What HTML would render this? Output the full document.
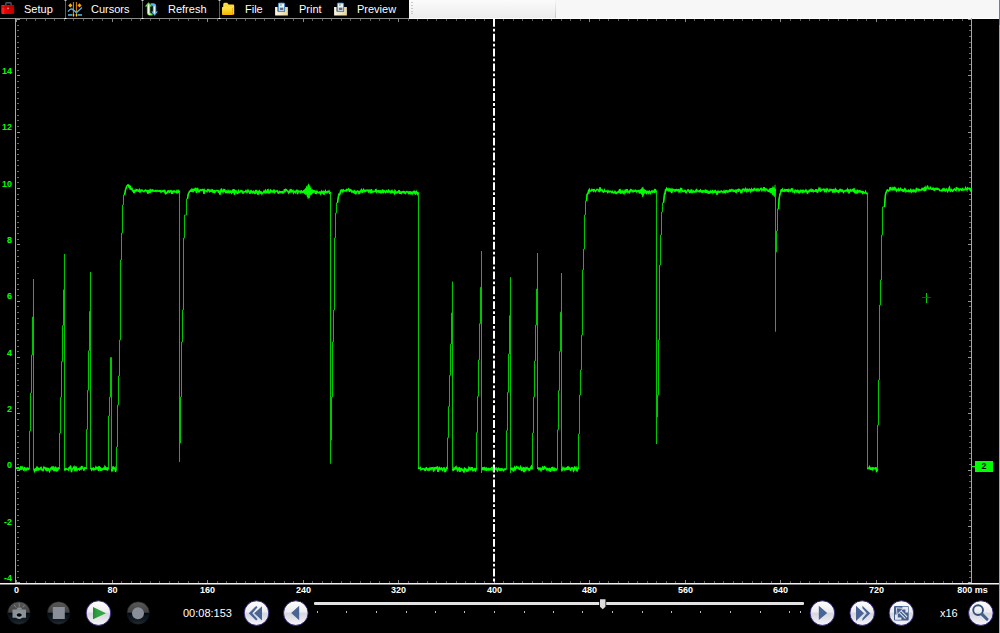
<!DOCTYPE html>
<html><head><meta charset="utf-8">
<style>
html,body{margin:0;padding:0;background:#000;}
body{width:1000px;height:633px;overflow:hidden;position:relative;font-family:"Liberation Sans",sans-serif;}
.abs{position:absolute;}
#tb{position:absolute;left:0;top:0;width:409px;height:18px;background:#000;}
#lt1{position:absolute;left:409px;top:0;width:146px;height:18px;background:linear-gradient(#fbfbfb,#ececec);}
#lt2{position:absolute;left:555px;top:0;width:444px;height:18px;background:#f7f7f7;}
.tt{position:absolute;top:0;height:18px;line-height:18px;font-size:11px;color:#fff;white-space:nowrap;}
.yl{position:absolute;left:0;width:12px;height:14px;line-height:14px;text-align:right;font-size:9px;font-weight:bold;color:#00ff00;}
.xl{position:absolute;top:584px;width:60px;height:12px;line-height:12px;text-align:center;font-size:9px;font-weight:bold;color:#fff;white-space:nowrap;}
svg{position:absolute;left:0;top:0;}
</style></head><body>
<div id="tb"></div><div id="lt1"></div><div id="lt2"></div>
<svg width="420" height="18" viewBox="0 0 420 18" style="position:absolute;left:0;top:0">
 <defs>
  <linearGradient id="tbr" x1="0" y1="0" x2="1" y2="0"><stop offset="0" stop-color="#d80000"/><stop offset="0.15" stop-color="#ff2a2a"/><stop offset="0.3" stop-color="#e80000"/><stop offset="1" stop-color="#c00000"/></linearGradient>
  <linearGradient id="fy" x1="0" y1="0" x2="0" y2="1"><stop offset="0" stop-color="#ffe84a"/><stop offset="1" stop-color="#f4b400"/></linearGradient>
  <linearGradient id="tray" x1="0" y1="0" x2="1" y2="0"><stop offset="0" stop-color="#fbf6e6"/><stop offset="1" stop-color="#e8d49a"/></linearGradient>
 </defs>
 <!-- toolbox -->
 <path d="M5.8 5 V3.6 Q5.8 2.8 6.6 2.8 H10.3 Q11.1 2.8 11.1 3.6 V5" fill="none" stroke="#4a5a5a" stroke-width="1.4"/>
 <rect x="1.1" y="5" width="13" height="8.9" rx="0.8" fill="url(#tbr)"/>
 <rect x="1.1" y="6.6" width="13" height="0.8" fill="#a00000"/>
 <circle cx="8" cy="8.3" r="0.9" fill="#b0b0b0"/>
 <!-- cursors icon -->
 <g stroke="#e88a00" stroke-width="1"><line x1="73.4" y1="2" x2="73.4" y2="16.8"/><line x1="76.4" y1="2" x2="76.4" y2="16.8"/></g>
 <path d="M70.3 3.2 L72.4 5.4 L70.3 7.6 L68.2 5.4Z" fill="#ffb400"/>
 <path d="M79.5 3.2 L81.6 5.4 L79.5 7.6 L77.4 5.4Z" fill="#ffa000"/>
 <path d="M68 11.6 Q70.8 7.4 73.4 10 L76.5 12.6 L82 7.6" fill="none" stroke="#5ab0e6" stroke-width="1.3"/>
 <rect x="68" y="14.2" width="4.2" height="1.5" fill="#5ab8ec"/><rect x="77.8" y="14.2" width="4.2" height="1.5" fill="#5ab8ec"/>
 <rect x="72.8" y="14" width="1.4" height="2" fill="#ffc800"/><rect x="75.8" y="14" width="1.4" height="2" fill="#ffc800"/>
 <!-- refresh -->
 <path d="M150.6 3.2 H153 Q156.2 3.2 156.2 6.4 V11.6 H158 L154.6 15.8 L151.2 11.6 H152.8 V6.8 Q152.8 5.6 151.6 5.6 H150.6Z" fill="#5ab4f0"/>
 <path d="M154.4 6.2 V13.6" stroke="#e4f2ff" stroke-width="1.2"/>
 <path d="M148.5 2.2 L152.2 6.6 H150.3 V12 Q150.3 13.4 151.6 13.4 H152.6 V15.6 H150.6 Q146.9 15.6 146.9 12.2 V6.6 H144.8Z" fill="#6cd84a"/>
 <path d="M148.6 4.4 V12.8 Q148.6 14.4 150.4 14.5" fill="none" stroke="#f0ffe8" stroke-width="1.2"/>
 <!-- folder -->
 <path d="M223.2 4.6 Q223.2 2.8 224.6 2.8 H227.2 L228.6 4.6 H233 Q234.2 4.6 234.2 5.8 V14.6 H223.2Z" fill="#ffd83a"/>
 <path d="M222 7.6 Q222 7 222.6 7 H231.4 Q232.6 7 232.6 8.2 V14.9 H222.8 Q222 14.9 222 14.2Z" fill="url(#fy)"/>
 <path d="M232.6 8.2 V14.9" stroke="#e89a00" stroke-width="0.8"/>
 <!-- print -->
 <path d="M275.1 7.1 H277.6 V11.6 H285 V7.1 H287.9 V15.6 H275.1Z" fill="url(#tray)"/>
 <rect x="278.4" y="3.1" width="6.2" height="8.1" rx="0.6" fill="#e8f0f8" stroke="#3a8ed6" stroke-width="0.9"/>
 <rect x="279.8" y="7.6" width="3.6" height="2.4" fill="#6a6a6a"/>
 <rect x="280.2" y="3.8" width="1.4" height="2.2" fill="#a0a8b0"/>
 <!-- preview -->
 <path d="M334.1 7.1 H336.6 V11.6 H344 V7.1 H346.9 V15.6 H334.1Z" fill="url(#tray)"/>
 <rect x="337.4" y="3.1" width="6.2" height="8.1" rx="0.6" fill="#e8f0f8" stroke="#3a8ed6" stroke-width="0.9"/>
 <rect x="338.8" y="7.6" width="3.6" height="2.4" fill="#6a6a6a"/>
 <rect x="339.2" y="3.8" width="1.4" height="2.2" fill="#a0a8b0"/>
</svg>
<svg width="1000" height="633" viewBox="0 0 1000 633">
 <!-- grip -->
 <g fill="#c8c8c8"><rect x="411" y="2" width="2" height="1"/><rect x="411" y="5" width="2" height="1"/><rect x="411" y="8" width="2" height="1"/><rect x="411" y="11" width="2" height="1"/><rect x="411" y="13" width="2" height="1"/></g>
 <defs><linearGradient id="dv" x1="0" y1="0" x2="0" y2="1"><stop offset="0" stop-color="#f6f6f6"/><stop offset="1" stop-color="#c4c4c4"/></linearGradient></defs><rect x="555" y="0" width="1" height="18" fill="url(#dv)"/>
 <!-- right border -->
 <rect x="999" y="0" width="1" height="633" fill="#a4a8ac"/>
 <rect x="999" y="0" width="1" height="25" fill="#6f7f90"/>
 <!-- axes -->
 <rect x="0" y="18" width="999" height="1" fill="#8c8c8c"/>
 <rect x="409" y="18" width="590" height="1" fill="#ffffff"/>
 <rect x="15" y="18" width="1" height="566" fill="#a8a8a8"/>
 <rect x="971" y="18" width="1" height="566" fill="#a8a8a8"/>
 <rect x="0" y="583" width="999" height="1.5" fill="#f0f0f0"/>
 <!-- toolbar separators -->
 <g fill="#5e5e5e"><rect x="65" y="0" width="1" height="18"/><rect x="142" y="0" width="1" height="18"/><rect x="219" y="0" width="1" height="18"/></g>
 <g fill="#c8c8c8"><rect x="64.5" y="0" width="2" height="1"/><rect x="141.5" y="0" width="2" height="1"/><rect x="218.5" y="0" width="2" height="1"/></g>
 <g fill="#ffffff"><rect x="64.5" y="18" width="2" height="1"/><rect x="141.5" y="18" width="2" height="1"/><rect x="218.5" y="18" width="2" height="1"/></g>
 <rect x="16" y="19" width="1" height="3" fill="#8a8a8a"/><rect x="16" y="580" width="1" height="3" fill="#8a8a8a"/><rect x="26" y="19" width="1" height="2" fill="#5a5a5a"/><rect x="26" y="581" width="1" height="2" fill="#5a5a5a"/><rect x="35" y="19" width="1" height="2" fill="#5a5a5a"/><rect x="35" y="581" width="1" height="2" fill="#5a5a5a"/><rect x="45" y="19" width="1" height="2" fill="#5a5a5a"/><rect x="45" y="581" width="1" height="2" fill="#5a5a5a"/><rect x="54" y="19" width="1" height="2" fill="#5a5a5a"/><rect x="54" y="581" width="1" height="2" fill="#5a5a5a"/><rect x="64" y="19" width="1" height="2" fill="#5a5a5a"/><rect x="64" y="581" width="1" height="2" fill="#5a5a5a"/><rect x="73" y="19" width="1" height="2" fill="#5a5a5a"/><rect x="73" y="581" width="1" height="2" fill="#5a5a5a"/><rect x="83" y="19" width="1" height="2" fill="#5a5a5a"/><rect x="83" y="581" width="1" height="2" fill="#5a5a5a"/><rect x="92" y="19" width="1" height="2" fill="#5a5a5a"/><rect x="92" y="581" width="1" height="2" fill="#5a5a5a"/><rect x="102" y="19" width="1" height="2" fill="#5a5a5a"/><rect x="102" y="581" width="1" height="2" fill="#5a5a5a"/><rect x="112" y="19" width="1" height="3" fill="#8a8a8a"/><rect x="112" y="580" width="1" height="3" fill="#8a8a8a"/><rect x="121" y="19" width="1" height="2" fill="#5a5a5a"/><rect x="121" y="581" width="1" height="2" fill="#5a5a5a"/><rect x="131" y="19" width="1" height="2" fill="#5a5a5a"/><rect x="131" y="581" width="1" height="2" fill="#5a5a5a"/><rect x="140" y="19" width="1" height="2" fill="#5a5a5a"/><rect x="140" y="581" width="1" height="2" fill="#5a5a5a"/><rect x="150" y="19" width="1" height="2" fill="#5a5a5a"/><rect x="150" y="581" width="1" height="2" fill="#5a5a5a"/><rect x="159" y="19" width="1" height="2" fill="#5a5a5a"/><rect x="159" y="581" width="1" height="2" fill="#5a5a5a"/><rect x="169" y="19" width="1" height="2" fill="#5a5a5a"/><rect x="169" y="581" width="1" height="2" fill="#5a5a5a"/><rect x="178" y="19" width="1" height="2" fill="#5a5a5a"/><rect x="178" y="581" width="1" height="2" fill="#5a5a5a"/><rect x="188" y="19" width="1" height="2" fill="#5a5a5a"/><rect x="188" y="581" width="1" height="2" fill="#5a5a5a"/><rect x="198" y="19" width="1" height="2" fill="#5a5a5a"/><rect x="198" y="581" width="1" height="2" fill="#5a5a5a"/><rect x="207" y="19" width="1" height="3" fill="#8a8a8a"/><rect x="207" y="580" width="1" height="3" fill="#8a8a8a"/><rect x="217" y="19" width="1" height="2" fill="#5a5a5a"/><rect x="217" y="581" width="1" height="2" fill="#5a5a5a"/><rect x="226" y="19" width="1" height="2" fill="#5a5a5a"/><rect x="226" y="581" width="1" height="2" fill="#5a5a5a"/><rect x="236" y="19" width="1" height="2" fill="#5a5a5a"/><rect x="236" y="581" width="1" height="2" fill="#5a5a5a"/><rect x="245" y="19" width="1" height="2" fill="#5a5a5a"/><rect x="245" y="581" width="1" height="2" fill="#5a5a5a"/><rect x="255" y="19" width="1" height="2" fill="#5a5a5a"/><rect x="255" y="581" width="1" height="2" fill="#5a5a5a"/><rect x="264" y="19" width="1" height="2" fill="#5a5a5a"/><rect x="264" y="581" width="1" height="2" fill="#5a5a5a"/><rect x="274" y="19" width="1" height="2" fill="#5a5a5a"/><rect x="274" y="581" width="1" height="2" fill="#5a5a5a"/><rect x="284" y="19" width="1" height="2" fill="#5a5a5a"/><rect x="284" y="581" width="1" height="2" fill="#5a5a5a"/><rect x="293" y="19" width="1" height="2" fill="#5a5a5a"/><rect x="293" y="581" width="1" height="2" fill="#5a5a5a"/><rect x="303" y="19" width="1" height="3" fill="#8a8a8a"/><rect x="303" y="580" width="1" height="3" fill="#8a8a8a"/><rect x="312" y="19" width="1" height="2" fill="#5a5a5a"/><rect x="312" y="581" width="1" height="2" fill="#5a5a5a"/><rect x="322" y="19" width="1" height="2" fill="#5a5a5a"/><rect x="322" y="581" width="1" height="2" fill="#5a5a5a"/><rect x="331" y="19" width="1" height="2" fill="#5a5a5a"/><rect x="331" y="581" width="1" height="2" fill="#5a5a5a"/><rect x="341" y="19" width="1" height="2" fill="#5a5a5a"/><rect x="341" y="581" width="1" height="2" fill="#5a5a5a"/><rect x="350" y="19" width="1" height="2" fill="#5a5a5a"/><rect x="350" y="581" width="1" height="2" fill="#5a5a5a"/><rect x="360" y="19" width="1" height="2" fill="#5a5a5a"/><rect x="360" y="581" width="1" height="2" fill="#5a5a5a"/><rect x="370" y="19" width="1" height="2" fill="#5a5a5a"/><rect x="370" y="581" width="1" height="2" fill="#5a5a5a"/><rect x="379" y="19" width="1" height="2" fill="#5a5a5a"/><rect x="379" y="581" width="1" height="2" fill="#5a5a5a"/><rect x="389" y="19" width="1" height="2" fill="#5a5a5a"/><rect x="389" y="581" width="1" height="2" fill="#5a5a5a"/><rect x="398" y="19" width="1" height="3" fill="#8a8a8a"/><rect x="398" y="580" width="1" height="3" fill="#8a8a8a"/><rect x="408" y="19" width="1" height="2" fill="#5a5a5a"/><rect x="408" y="581" width="1" height="2" fill="#5a5a5a"/><rect x="417" y="19" width="1" height="2" fill="#5a5a5a"/><rect x="417" y="581" width="1" height="2" fill="#5a5a5a"/><rect x="427" y="19" width="1" height="2" fill="#5a5a5a"/><rect x="427" y="581" width="1" height="2" fill="#5a5a5a"/><rect x="436" y="19" width="1" height="2" fill="#5a5a5a"/><rect x="436" y="581" width="1" height="2" fill="#5a5a5a"/><rect x="446" y="19" width="1" height="2" fill="#5a5a5a"/><rect x="446" y="581" width="1" height="2" fill="#5a5a5a"/><rect x="456" y="19" width="1" height="2" fill="#5a5a5a"/><rect x="456" y="581" width="1" height="2" fill="#5a5a5a"/><rect x="465" y="19" width="1" height="2" fill="#5a5a5a"/><rect x="465" y="581" width="1" height="2" fill="#5a5a5a"/><rect x="475" y="19" width="1" height="2" fill="#5a5a5a"/><rect x="475" y="581" width="1" height="2" fill="#5a5a5a"/><rect x="484" y="19" width="1" height="2" fill="#5a5a5a"/><rect x="484" y="581" width="1" height="2" fill="#5a5a5a"/><rect x="494" y="19" width="1" height="3" fill="#8a8a8a"/><rect x="494" y="580" width="1" height="3" fill="#8a8a8a"/><rect x="503" y="19" width="1" height="2" fill="#5a5a5a"/><rect x="503" y="581" width="1" height="2" fill="#5a5a5a"/><rect x="513" y="19" width="1" height="2" fill="#5a5a5a"/><rect x="513" y="581" width="1" height="2" fill="#5a5a5a"/><rect x="522" y="19" width="1" height="2" fill="#5a5a5a"/><rect x="522" y="581" width="1" height="2" fill="#5a5a5a"/><rect x="532" y="19" width="1" height="2" fill="#5a5a5a"/><rect x="532" y="581" width="1" height="2" fill="#5a5a5a"/><rect x="542" y="19" width="1" height="2" fill="#5a5a5a"/><rect x="542" y="581" width="1" height="2" fill="#5a5a5a"/><rect x="551" y="19" width="1" height="2" fill="#5a5a5a"/><rect x="551" y="581" width="1" height="2" fill="#5a5a5a"/><rect x="561" y="19" width="1" height="2" fill="#5a5a5a"/><rect x="561" y="581" width="1" height="2" fill="#5a5a5a"/><rect x="570" y="19" width="1" height="2" fill="#5a5a5a"/><rect x="570" y="581" width="1" height="2" fill="#5a5a5a"/><rect x="580" y="19" width="1" height="2" fill="#5a5a5a"/><rect x="580" y="581" width="1" height="2" fill="#5a5a5a"/><rect x="589" y="19" width="1" height="3" fill="#8a8a8a"/><rect x="589" y="580" width="1" height="3" fill="#8a8a8a"/><rect x="599" y="19" width="1" height="2" fill="#5a5a5a"/><rect x="599" y="581" width="1" height="2" fill="#5a5a5a"/><rect x="608" y="19" width="1" height="2" fill="#5a5a5a"/><rect x="608" y="581" width="1" height="2" fill="#5a5a5a"/><rect x="618" y="19" width="1" height="2" fill="#5a5a5a"/><rect x="618" y="581" width="1" height="2" fill="#5a5a5a"/><rect x="628" y="19" width="1" height="2" fill="#5a5a5a"/><rect x="628" y="581" width="1" height="2" fill="#5a5a5a"/><rect x="637" y="19" width="1" height="2" fill="#5a5a5a"/><rect x="637" y="581" width="1" height="2" fill="#5a5a5a"/><rect x="647" y="19" width="1" height="2" fill="#5a5a5a"/><rect x="647" y="581" width="1" height="2" fill="#5a5a5a"/><rect x="656" y="19" width="1" height="2" fill="#5a5a5a"/><rect x="656" y="581" width="1" height="2" fill="#5a5a5a"/><rect x="666" y="19" width="1" height="2" fill="#5a5a5a"/><rect x="666" y="581" width="1" height="2" fill="#5a5a5a"/><rect x="675" y="19" width="1" height="2" fill="#5a5a5a"/><rect x="675" y="581" width="1" height="2" fill="#5a5a5a"/><rect x="685" y="19" width="1" height="3" fill="#8a8a8a"/><rect x="685" y="580" width="1" height="3" fill="#8a8a8a"/><rect x="694" y="19" width="1" height="2" fill="#5a5a5a"/><rect x="694" y="581" width="1" height="2" fill="#5a5a5a"/><rect x="704" y="19" width="1" height="2" fill="#5a5a5a"/><rect x="704" y="581" width="1" height="2" fill="#5a5a5a"/><rect x="714" y="19" width="1" height="2" fill="#5a5a5a"/><rect x="714" y="581" width="1" height="2" fill="#5a5a5a"/><rect x="723" y="19" width="1" height="2" fill="#5a5a5a"/><rect x="723" y="581" width="1" height="2" fill="#5a5a5a"/><rect x="733" y="19" width="1" height="2" fill="#5a5a5a"/><rect x="733" y="581" width="1" height="2" fill="#5a5a5a"/><rect x="742" y="19" width="1" height="2" fill="#5a5a5a"/><rect x="742" y="581" width="1" height="2" fill="#5a5a5a"/><rect x="752" y="19" width="1" height="2" fill="#5a5a5a"/><rect x="752" y="581" width="1" height="2" fill="#5a5a5a"/><rect x="761" y="19" width="1" height="2" fill="#5a5a5a"/><rect x="761" y="581" width="1" height="2" fill="#5a5a5a"/><rect x="771" y="19" width="1" height="2" fill="#5a5a5a"/><rect x="771" y="581" width="1" height="2" fill="#5a5a5a"/><rect x="780" y="19" width="1" height="3" fill="#8a8a8a"/><rect x="780" y="580" width="1" height="3" fill="#8a8a8a"/><rect x="790" y="19" width="1" height="2" fill="#5a5a5a"/><rect x="790" y="581" width="1" height="2" fill="#5a5a5a"/><rect x="800" y="19" width="1" height="2" fill="#5a5a5a"/><rect x="800" y="581" width="1" height="2" fill="#5a5a5a"/><rect x="809" y="19" width="1" height="2" fill="#5a5a5a"/><rect x="809" y="581" width="1" height="2" fill="#5a5a5a"/><rect x="819" y="19" width="1" height="2" fill="#5a5a5a"/><rect x="819" y="581" width="1" height="2" fill="#5a5a5a"/><rect x="828" y="19" width="1" height="2" fill="#5a5a5a"/><rect x="828" y="581" width="1" height="2" fill="#5a5a5a"/><rect x="838" y="19" width="1" height="2" fill="#5a5a5a"/><rect x="838" y="581" width="1" height="2" fill="#5a5a5a"/><rect x="847" y="19" width="1" height="2" fill="#5a5a5a"/><rect x="847" y="581" width="1" height="2" fill="#5a5a5a"/><rect x="857" y="19" width="1" height="2" fill="#5a5a5a"/><rect x="857" y="581" width="1" height="2" fill="#5a5a5a"/><rect x="866" y="19" width="1" height="2" fill="#5a5a5a"/><rect x="866" y="581" width="1" height="2" fill="#5a5a5a"/><rect x="876" y="19" width="1" height="3" fill="#8a8a8a"/><rect x="876" y="580" width="1" height="3" fill="#8a8a8a"/><rect x="886" y="19" width="1" height="2" fill="#5a5a5a"/><rect x="886" y="581" width="1" height="2" fill="#5a5a5a"/><rect x="895" y="19" width="1" height="2" fill="#5a5a5a"/><rect x="895" y="581" width="1" height="2" fill="#5a5a5a"/><rect x="905" y="19" width="1" height="2" fill="#5a5a5a"/><rect x="905" y="581" width="1" height="2" fill="#5a5a5a"/><rect x="914" y="19" width="1" height="2" fill="#5a5a5a"/><rect x="914" y="581" width="1" height="2" fill="#5a5a5a"/><rect x="924" y="19" width="1" height="2" fill="#5a5a5a"/><rect x="924" y="581" width="1" height="2" fill="#5a5a5a"/><rect x="933" y="19" width="1" height="2" fill="#5a5a5a"/><rect x="933" y="581" width="1" height="2" fill="#5a5a5a"/><rect x="943" y="19" width="1" height="2" fill="#5a5a5a"/><rect x="943" y="581" width="1" height="2" fill="#5a5a5a"/><rect x="952" y="19" width="1" height="2" fill="#5a5a5a"/><rect x="952" y="581" width="1" height="2" fill="#5a5a5a"/><rect x="962" y="19" width="1" height="2" fill="#5a5a5a"/><rect x="962" y="581" width="1" height="2" fill="#5a5a5a"/><rect x="17" y="19" width="3" height="1" fill="#9a9a9a"/><rect x="968" y="19" width="3" height="1" fill="#9a9a9a"/><rect x="17" y="25" width="2" height="1" fill="#6a6a6a"/><rect x="969" y="25" width="2" height="1" fill="#6a6a6a"/><rect x="17" y="30" width="2" height="1" fill="#6a6a6a"/><rect x="969" y="30" width="2" height="1" fill="#6a6a6a"/><rect x="17" y="36" width="2" height="1" fill="#6a6a6a"/><rect x="969" y="36" width="2" height="1" fill="#6a6a6a"/><rect x="17" y="42" width="2" height="1" fill="#6a6a6a"/><rect x="969" y="42" width="2" height="1" fill="#6a6a6a"/><rect x="17" y="47" width="2" height="1" fill="#6a6a6a"/><rect x="969" y="47" width="2" height="1" fill="#6a6a6a"/><rect x="17" y="53" width="2" height="1" fill="#6a6a6a"/><rect x="969" y="53" width="2" height="1" fill="#6a6a6a"/><rect x="17" y="58" width="2" height="1" fill="#6a6a6a"/><rect x="969" y="58" width="2" height="1" fill="#6a6a6a"/><rect x="17" y="64" width="2" height="1" fill="#6a6a6a"/><rect x="969" y="64" width="2" height="1" fill="#6a6a6a"/><rect x="17" y="70" width="2" height="1" fill="#6a6a6a"/><rect x="969" y="70" width="2" height="1" fill="#6a6a6a"/><rect x="17" y="75" width="3" height="1" fill="#9a9a9a"/><rect x="968" y="75" width="3" height="1" fill="#9a9a9a"/><rect x="17" y="81" width="2" height="1" fill="#6a6a6a"/><rect x="969" y="81" width="2" height="1" fill="#6a6a6a"/><rect x="17" y="87" width="2" height="1" fill="#6a6a6a"/><rect x="969" y="87" width="2" height="1" fill="#6a6a6a"/><rect x="17" y="92" width="2" height="1" fill="#6a6a6a"/><rect x="969" y="92" width="2" height="1" fill="#6a6a6a"/><rect x="17" y="98" width="2" height="1" fill="#6a6a6a"/><rect x="969" y="98" width="2" height="1" fill="#6a6a6a"/><rect x="17" y="103" width="2" height="1" fill="#6a6a6a"/><rect x="969" y="103" width="2" height="1" fill="#6a6a6a"/><rect x="17" y="109" width="2" height="1" fill="#6a6a6a"/><rect x="969" y="109" width="2" height="1" fill="#6a6a6a"/><rect x="17" y="115" width="2" height="1" fill="#6a6a6a"/><rect x="969" y="115" width="2" height="1" fill="#6a6a6a"/><rect x="17" y="120" width="2" height="1" fill="#6a6a6a"/><rect x="969" y="120" width="2" height="1" fill="#6a6a6a"/><rect x="17" y="126" width="2" height="1" fill="#6a6a6a"/><rect x="969" y="126" width="2" height="1" fill="#6a6a6a"/><rect x="17" y="132" width="3" height="1" fill="#9a9a9a"/><rect x="968" y="132" width="3" height="1" fill="#9a9a9a"/><rect x="17" y="137" width="2" height="1" fill="#6a6a6a"/><rect x="969" y="137" width="2" height="1" fill="#6a6a6a"/><rect x="17" y="143" width="2" height="1" fill="#6a6a6a"/><rect x="969" y="143" width="2" height="1" fill="#6a6a6a"/><rect x="17" y="149" width="2" height="1" fill="#6a6a6a"/><rect x="969" y="149" width="2" height="1" fill="#6a6a6a"/><rect x="17" y="154" width="2" height="1" fill="#6a6a6a"/><rect x="969" y="154" width="2" height="1" fill="#6a6a6a"/><rect x="17" y="160" width="2" height="1" fill="#6a6a6a"/><rect x="969" y="160" width="2" height="1" fill="#6a6a6a"/><rect x="17" y="165" width="2" height="1" fill="#6a6a6a"/><rect x="969" y="165" width="2" height="1" fill="#6a6a6a"/><rect x="17" y="171" width="2" height="1" fill="#6a6a6a"/><rect x="969" y="171" width="2" height="1" fill="#6a6a6a"/><rect x="17" y="177" width="2" height="1" fill="#6a6a6a"/><rect x="969" y="177" width="2" height="1" fill="#6a6a6a"/><rect x="17" y="182" width="2" height="1" fill="#6a6a6a"/><rect x="969" y="182" width="2" height="1" fill="#6a6a6a"/><rect x="17" y="188" width="3" height="1" fill="#9a9a9a"/><rect x="968" y="188" width="3" height="1" fill="#9a9a9a"/><rect x="17" y="194" width="2" height="1" fill="#6a6a6a"/><rect x="969" y="194" width="2" height="1" fill="#6a6a6a"/><rect x="17" y="199" width="2" height="1" fill="#6a6a6a"/><rect x="969" y="199" width="2" height="1" fill="#6a6a6a"/><rect x="17" y="205" width="2" height="1" fill="#6a6a6a"/><rect x="969" y="205" width="2" height="1" fill="#6a6a6a"/><rect x="17" y="211" width="2" height="1" fill="#6a6a6a"/><rect x="969" y="211" width="2" height="1" fill="#6a6a6a"/><rect x="17" y="216" width="2" height="1" fill="#6a6a6a"/><rect x="969" y="216" width="2" height="1" fill="#6a6a6a"/><rect x="17" y="222" width="2" height="1" fill="#6a6a6a"/><rect x="969" y="222" width="2" height="1" fill="#6a6a6a"/><rect x="17" y="227" width="2" height="1" fill="#6a6a6a"/><rect x="969" y="227" width="2" height="1" fill="#6a6a6a"/><rect x="17" y="233" width="2" height="1" fill="#6a6a6a"/><rect x="969" y="233" width="2" height="1" fill="#6a6a6a"/><rect x="17" y="239" width="2" height="1" fill="#6a6a6a"/><rect x="969" y="239" width="2" height="1" fill="#6a6a6a"/><rect x="17" y="244" width="3" height="1" fill="#9a9a9a"/><rect x="968" y="244" width="3" height="1" fill="#9a9a9a"/><rect x="17" y="250" width="2" height="1" fill="#6a6a6a"/><rect x="969" y="250" width="2" height="1" fill="#6a6a6a"/><rect x="17" y="256" width="2" height="1" fill="#6a6a6a"/><rect x="969" y="256" width="2" height="1" fill="#6a6a6a"/><rect x="17" y="261" width="2" height="1" fill="#6a6a6a"/><rect x="969" y="261" width="2" height="1" fill="#6a6a6a"/><rect x="17" y="267" width="2" height="1" fill="#6a6a6a"/><rect x="969" y="267" width="2" height="1" fill="#6a6a6a"/><rect x="17" y="273" width="2" height="1" fill="#6a6a6a"/><rect x="969" y="273" width="2" height="1" fill="#6a6a6a"/><rect x="17" y="278" width="2" height="1" fill="#6a6a6a"/><rect x="969" y="278" width="2" height="1" fill="#6a6a6a"/><rect x="17" y="284" width="2" height="1" fill="#6a6a6a"/><rect x="969" y="284" width="2" height="1" fill="#6a6a6a"/><rect x="17" y="289" width="2" height="1" fill="#6a6a6a"/><rect x="969" y="289" width="2" height="1" fill="#6a6a6a"/><rect x="17" y="295" width="2" height="1" fill="#6a6a6a"/><rect x="969" y="295" width="2" height="1" fill="#6a6a6a"/><rect x="17" y="301" width="3" height="1" fill="#9a9a9a"/><rect x="968" y="301" width="3" height="1" fill="#9a9a9a"/><rect x="17" y="306" width="2" height="1" fill="#6a6a6a"/><rect x="969" y="306" width="2" height="1" fill="#6a6a6a"/><rect x="17" y="312" width="2" height="1" fill="#6a6a6a"/><rect x="969" y="312" width="2" height="1" fill="#6a6a6a"/><rect x="17" y="318" width="2" height="1" fill="#6a6a6a"/><rect x="969" y="318" width="2" height="1" fill="#6a6a6a"/><rect x="17" y="323" width="2" height="1" fill="#6a6a6a"/><rect x="969" y="323" width="2" height="1" fill="#6a6a6a"/><rect x="17" y="329" width="2" height="1" fill="#6a6a6a"/><rect x="969" y="329" width="2" height="1" fill="#6a6a6a"/><rect x="17" y="334" width="2" height="1" fill="#6a6a6a"/><rect x="969" y="334" width="2" height="1" fill="#6a6a6a"/><rect x="17" y="340" width="2" height="1" fill="#6a6a6a"/><rect x="969" y="340" width="2" height="1" fill="#6a6a6a"/><rect x="17" y="346" width="2" height="1" fill="#6a6a6a"/><rect x="969" y="346" width="2" height="1" fill="#6a6a6a"/><rect x="17" y="351" width="2" height="1" fill="#6a6a6a"/><rect x="969" y="351" width="2" height="1" fill="#6a6a6a"/><rect x="17" y="357" width="3" height="1" fill="#9a9a9a"/><rect x="968" y="357" width="3" height="1" fill="#9a9a9a"/><rect x="17" y="363" width="2" height="1" fill="#6a6a6a"/><rect x="969" y="363" width="2" height="1" fill="#6a6a6a"/><rect x="17" y="368" width="2" height="1" fill="#6a6a6a"/><rect x="969" y="368" width="2" height="1" fill="#6a6a6a"/><rect x="17" y="374" width="2" height="1" fill="#6a6a6a"/><rect x="969" y="374" width="2" height="1" fill="#6a6a6a"/><rect x="17" y="380" width="2" height="1" fill="#6a6a6a"/><rect x="969" y="380" width="2" height="1" fill="#6a6a6a"/><rect x="17" y="385" width="2" height="1" fill="#6a6a6a"/><rect x="969" y="385" width="2" height="1" fill="#6a6a6a"/><rect x="17" y="391" width="2" height="1" fill="#6a6a6a"/><rect x="969" y="391" width="2" height="1" fill="#6a6a6a"/><rect x="17" y="396" width="2" height="1" fill="#6a6a6a"/><rect x="969" y="396" width="2" height="1" fill="#6a6a6a"/><rect x="17" y="402" width="2" height="1" fill="#6a6a6a"/><rect x="969" y="402" width="2" height="1" fill="#6a6a6a"/><rect x="17" y="408" width="2" height="1" fill="#6a6a6a"/><rect x="969" y="408" width="2" height="1" fill="#6a6a6a"/><rect x="17" y="413" width="3" height="1" fill="#9a9a9a"/><rect x="968" y="413" width="3" height="1" fill="#9a9a9a"/><rect x="17" y="419" width="2" height="1" fill="#6a6a6a"/><rect x="969" y="419" width="2" height="1" fill="#6a6a6a"/><rect x="17" y="425" width="2" height="1" fill="#6a6a6a"/><rect x="969" y="425" width="2" height="1" fill="#6a6a6a"/><rect x="17" y="430" width="2" height="1" fill="#6a6a6a"/><rect x="969" y="430" width="2" height="1" fill="#6a6a6a"/><rect x="17" y="436" width="2" height="1" fill="#6a6a6a"/><rect x="969" y="436" width="2" height="1" fill="#6a6a6a"/><rect x="17" y="442" width="2" height="1" fill="#6a6a6a"/><rect x="969" y="442" width="2" height="1" fill="#6a6a6a"/><rect x="17" y="447" width="2" height="1" fill="#6a6a6a"/><rect x="969" y="447" width="2" height="1" fill="#6a6a6a"/><rect x="17" y="453" width="2" height="1" fill="#6a6a6a"/><rect x="969" y="453" width="2" height="1" fill="#6a6a6a"/><rect x="17" y="458" width="2" height="1" fill="#6a6a6a"/><rect x="969" y="458" width="2" height="1" fill="#6a6a6a"/><rect x="17" y="464" width="2" height="1" fill="#6a6a6a"/><rect x="969" y="464" width="2" height="1" fill="#6a6a6a"/><rect x="17" y="470" width="3" height="1" fill="#9a9a9a"/><rect x="968" y="470" width="3" height="1" fill="#9a9a9a"/><rect x="17" y="475" width="2" height="1" fill="#6a6a6a"/><rect x="969" y="475" width="2" height="1" fill="#6a6a6a"/><rect x="17" y="481" width="2" height="1" fill="#6a6a6a"/><rect x="969" y="481" width="2" height="1" fill="#6a6a6a"/><rect x="17" y="487" width="2" height="1" fill="#6a6a6a"/><rect x="969" y="487" width="2" height="1" fill="#6a6a6a"/><rect x="17" y="492" width="2" height="1" fill="#6a6a6a"/><rect x="969" y="492" width="2" height="1" fill="#6a6a6a"/><rect x="17" y="498" width="2" height="1" fill="#6a6a6a"/><rect x="969" y="498" width="2" height="1" fill="#6a6a6a"/><rect x="17" y="504" width="2" height="1" fill="#6a6a6a"/><rect x="969" y="504" width="2" height="1" fill="#6a6a6a"/><rect x="17" y="509" width="2" height="1" fill="#6a6a6a"/><rect x="969" y="509" width="2" height="1" fill="#6a6a6a"/><rect x="17" y="515" width="2" height="1" fill="#6a6a6a"/><rect x="969" y="515" width="2" height="1" fill="#6a6a6a"/><rect x="17" y="520" width="2" height="1" fill="#6a6a6a"/><rect x="969" y="520" width="2" height="1" fill="#6a6a6a"/><rect x="17" y="526" width="3" height="1" fill="#9a9a9a"/><rect x="968" y="526" width="3" height="1" fill="#9a9a9a"/><rect x="17" y="532" width="2" height="1" fill="#6a6a6a"/><rect x="969" y="532" width="2" height="1" fill="#6a6a6a"/><rect x="17" y="537" width="2" height="1" fill="#6a6a6a"/><rect x="969" y="537" width="2" height="1" fill="#6a6a6a"/><rect x="17" y="543" width="2" height="1" fill="#6a6a6a"/><rect x="969" y="543" width="2" height="1" fill="#6a6a6a"/><rect x="17" y="549" width="2" height="1" fill="#6a6a6a"/><rect x="969" y="549" width="2" height="1" fill="#6a6a6a"/><rect x="17" y="554" width="2" height="1" fill="#6a6a6a"/><rect x="969" y="554" width="2" height="1" fill="#6a6a6a"/><rect x="17" y="560" width="2" height="1" fill="#6a6a6a"/><rect x="969" y="560" width="2" height="1" fill="#6a6a6a"/><rect x="17" y="565" width="2" height="1" fill="#6a6a6a"/><rect x="969" y="565" width="2" height="1" fill="#6a6a6a"/><rect x="17" y="571" width="2" height="1" fill="#6a6a6a"/><rect x="969" y="571" width="2" height="1" fill="#6a6a6a"/><rect x="17" y="577" width="2" height="1" fill="#6a6a6a"/><rect x="969" y="577" width="2" height="1" fill="#6a6a6a"/><rect x="17" y="582" width="3" height="1" fill="#9a9a9a"/><rect x="968" y="582" width="3" height="1" fill="#9a9a9a"/>
 <!-- waveform -->
 <polyline points="16.5,469 17,467.38 17.5,469.11 18,467.67 18.5,467.61 19,468.78 19.5,469.2 20,469.39 20.5,467.69 21,466.3 21.5,469.61 22,468.1 22.5,467.4 23,468.99 23.5,469.83 24,470.27 24.5,467.15 25,468.4 25.5,468.53 26,470.52 26.5,468.53 27,468.77 27.5,467.73 28,469.87 28.5,468.52 29,468.99 29.5,469 29.5,431 30.5,431 30.5,393 31.5,393 31.5,355 32.5,355 32.5,317 33.5,317 33.5,279 33.5,469 34,469.28 34.5,471.27 35,470.48 35.5,468.35 36,470.93 36.5,469.33 37,466.68 37.5,470.25 38,468 38.5,470.37 39,468.34 39.5,468.58 40,469.19 40.5,468.16 41,467.51 41.5,468.61 42,470.36 42.5,469.05 43,471.01 43.5,468.68 44,467.17 44.5,467.83 45,467.81 45.5,469.11 46,467.6 46.5,469.67 47,471.11 47.5,468.9 48,469.65 48.5,468.94 49,470.22 49.5,471.3 50,470.09 50.5,468.28 51,468 51.5,469.1 52,466.52 52.5,469.95 53,468.18 53.5,466.62 54,470.45 54.5,470.31 55,470.37 55.5,466.76 56,468.95 56.5,471.29 57,467.75 57.5,470.23 58,469.75 58.5,468.04 59,468.5 59.5,469 59.5,433.17 60.5,433.17 60.5,397.33 61.5,397.33 61.5,361.5 62.5,361.5 62.5,325.67 63.5,325.67 63.5,289.83 64.5,289.83 64.5,254 64.5,469 65,470.41 65.5,468.7 66,468.64 66.5,469.27 67,469.47 67.5,469.29 68,469.29 68.5,469.9 69,467.81 69.5,467.92 70,468.08 70.5,465.67 71,468.48 71.5,472.08 72,469.49 72.5,469.05 73,468.51 73.5,467.56 74,466.84 74.5,468.92 75,471.11 75.5,467.82 76,466.64 76.5,469.19 77,470.24 77.5,469.34 78,469.04 78.5,468.86 79,468.93 79.5,469.6 80,468.32 80.5,469.29 81,469.51 81.5,466.06 82,467.96 82.5,467.32 83,468.16 83.5,468.69 84,470.47 84.5,467.98 85,467.62 85.5,467.78 86.5,469 86.5,429.6 87.5,429.6 87.5,390.2 88.5,390.2 88.5,350.8 89.5,350.8 89.5,311.4 90.5,311.4 90.5,272 90.5,469 91,468.51 91.5,469.61 92,467.92 92.5,469.15 93,468.32 93.5,468.04 94,469.96 94.5,469.53 95,468.72 95.5,469.04 96,466.97 96.5,467.72 97,469.4 97.5,467.75 98,467.7 98.5,470.97 99,466.18 99.5,469.17 100,467.09 100.5,470.96 101,468.6 101.5,470.45 102,468.84 102.5,469.45 103,469.14 103.5,468.23 104,468.53 104.5,469.62 105,466.71 105.5,467.54 106,470.14 106.5,467.67 107,468.64 107.5,470.41 108,468.39 108.5,469 108.5,416 109.5,416 109.5,397 110.5,397 110.5,357.5 111.5,357.5 111.5,469 112,471 112.5,470.4 113,466.48 113.5,467.9 114,468.48 114.5,468.4 115,467.75 115.5,471.98 116,469.66 116.5,469 116.5,447 117.5,447 117.5,405 118.5,405 118.5,376 119.5,376 119.5,340 120.5,340 120.5,260 121.5,260 121.5,233 122.5,233 122.5,205 123.5,205 123.5,195 124.5,195 125,192.57 125.5,189.79 126,188.43 126.5,186.79 127,185.88 127.5,185.31 128,184.92 128.5,185.08 129,187.52 129.5,185.35 130,188.16 130.5,187.26 131,189.2 131.5,189.22 132,188.73 132.5,190.84 133,191.01 133.5,190.81 134,193.14 134.5,190.77 135,191.49 135.5,190.95 136,189.84 136.5,190.56 137,189.8 137.5,190.6 138,190.2 138.5,191.18 139,190.75 139.5,189.84 140,192.45 140.5,190.47 141,190.4 141.5,190.77 142,190 142.5,190.76 143,191.17 143.5,191.57 144,191.65 144.5,190.61 145,190.64 145.5,190.07 146,190.49 146.5,190.65 147,191.56 147.5,190.01 148,193.54 148.5,191.61 149,190.02 149.5,192.72 150,190.57 150.5,191.52 151,190.02 151.5,190.78 152,191.1 152.5,190.17 153,190.84 153.5,190.31 154,191.02 154.5,191.16 155,190.9 155.5,190.59 156,191.4 156.5,190.59 157,190.37 157.5,191.14 158,191.25 158.5,190.83 159,191.03 159.5,190.68 160,191.31 160.5,190.96 161,192.11 161.5,191.75 162,190.82 162.5,191.3 163,191.05 163.5,191.41 164,190.6 164.5,191.68 165,191.03 165.5,194.22 166,192.24 166.5,193.76 167,192.35 167.5,191.45 168,192.1 168.5,190.86 169,190.8 169.5,192 170,191.41 170.5,190.89 171,190.74 171.5,192.61 172,191.76 172.5,193.88 173,191.91 173.5,191.22 174,190.81 174.5,191.73 175,192.12 175.5,191.8 176,191.37 176.5,192.3 177,190.96 177.5,192.29 178,191.47 178.5,192.83 179,191.07 179.5,192 179.5,462 179.5,443 180.5,443 180.5,397 181.5,397 181.5,342 182.5,342 182.5,310 183.5,310 183.5,238 184.5,238 184.5,215 186.5,215 186.5,199 187.5,199 188,195.31 188.5,193.28 189,193.07 189.5,191.31 190,191.09 190.5,190.41 191,191.2 191.5,191.18 192,189.27 192.5,189.84 193,192.21 193.5,188.95 194,189.91 194.5,189.38 195,190.67 195.5,187.86 196,189.45 196.5,192.83 197,191.42 197.5,187.92 198,189.94 198.5,190.97 199,192.31 199.5,190.47 200,189.97 200.5,190.36 201,189.84 201.5,190.24 202,190.4 202.5,189.46 203,189.49 203.5,190.23 204,193.78 204.5,190.12 205,190.86 205.5,190.59 206,191.19 206.5,191.36 207,191.71 207.5,189.86 208,189.59 208.5,190.32 209,189.98 209.5,191.71 210,191.54 210.5,190.91 211,190.09 211.5,191.29 212,191.06 212.5,189.49 213,192.19 213.5,192.16 214,190.17 214.5,192.01 215,191.19 215.5,191.74 216,190.65 216.5,190.61 217,190.62 217.5,190.46 218,190.71 218.5,192.7 219,191.3 219.5,192.05 220,194.57 220.5,190.71 221,191.08 221.5,188.64 222,191.12 222.5,191.33 223,192.14 223.5,190.55 224,191.81 224.5,189.03 225,190.46 225.5,192.58 226,192.38 226.5,191.33 227,192.3 227.5,192.43 228,190.88 228.5,192.1 229,191.2 229.5,192.18 230,190.72 230.5,192.72 231,190.65 231.5,192.53 232,191.54 232.5,192.87 233,189.49 233.5,192.73 234,189.23 234.5,194.68 235,191.02 235.5,191 236,190.77 236.5,192.42 237,192.55 237.5,194 238,192.07 238.5,190.82 239,192.27 239.5,192.16 240,192.11 240.5,191.09 241,190.52 241.5,190.92 242,192.36 242.5,190.72 243,193.59 243.5,192.07 244,192.13 244.5,191.64 245,191.65 245.5,191.7 246,190.69 246.5,191.81 247,192.47 247.5,191.73 248,190.34 248.5,191.51 249,191.85 249.5,192.67 250,193.65 250.5,190.33 251,192.4 251.5,191.11 252,191.82 252.5,192.84 253,192.54 253.5,190.8 254,192.46 254.5,192.8 255,193.86 255.5,191.28 256,189.93 256.5,192.18 257,191.44 257.5,192.56 258,194.66 258.5,191.74 259,192.31 259.5,191.26 260,192.72 260.5,191.55 261,193.47 261.5,191.72 262,193.82 262.5,192.98 263,192.89 263.5,192.43 264,191.2 264.5,192.17 265,192.82 265.5,190.56 266,191.4 266.5,191.95 267,193.15 267.5,189.97 268,189.71 268.5,192.55 269,193.03 269.5,192.07 270,191.92 270.5,189.44 271,191.66 271.5,190.82 272,190.71 272.5,191.32 273,192.23 273.5,191.68 274,189.72 274.5,192.43 275,191.98 275.5,191.74 276,190.89 276.5,191.11 277,191.32 277.5,190.99 278,192.92 278.5,193.15 279,192.9 279.5,191.41 280,191.64 280.5,192.87 281,191.19 281.5,192.9 282,191.64 282.5,191.62 283,192.92 283.5,192.73 284,191.84 284.5,189.04 285,191.45 285.5,191.03 286,189.36 286.5,189.89 287,190.37 287.5,190.87 288,191.59 288.5,192.68 289,190.88 289.5,192.91 290,190.98 290.5,189 291,192.24 291.5,189.61 292,191.53 292.5,191.57 293,190.84 293.5,192.91 294,192.17 294.5,191.42 295,191.21 295.5,192.42 296,191.25 296.5,190.95 297,189.8 297.5,194.13 298,191.92 298.5,191.18 299,191.57 299.5,191.36 300,191.42 300.5,192.42 301,191.01 301.5,190.94 302,192.42 302.5,192.25 303,191.71 303.5,191.44 304,191.48 304.5,192.06 305,193.11 305.5,191.6 306,191.54 306.5,192.78 307,192.53 307.5,191.81 308,193.92 308.5,192.43 309,191.4 309.5,192.74 310,192.5 310.5,192.5 311,191.6 311.5,193.06 312,193.06 312.5,191.16 313,191.24 313.5,191.12 314,191.48 314.5,191.03 315,191.44 315.5,193.72 316,191.97 316.5,192.89 317,191.36 317.5,192.46 318,192.33 318.5,192.38 319,192.88 319.5,192.18 320,192.59 320.5,193.58 321,191.74 321.5,191.16 322,193.56 322.5,192.37 323,192.93 323.5,190.81 324,194.62 324.5,191.18 325,193.05 325.5,191.03 326,192.09 326.5,192.02 327,192.78 327.5,191.78 328,191.3 328.5,191.74 329,191.09 329.5,193.11 330,192.7 330.5,192 330.5,463.5 330.5,440 331.5,440 331.5,397 332.5,397 332.5,342 333.5,342 333.5,310 334.5,310 334.5,238 335.5,238 335.5,213 336.5,213 336.5,203 337.5,203 338,199.42 338.5,195.81 339,194.26 339.5,194.79 340,193.92 340.5,191.17 341,190.1 341.5,190 342,191.17 342.5,189.69 343,191.23 343.5,190.12 344,190.85 344.5,190.8 345,190.71 345.5,190.42 346,190.98 346.5,189.68 347,190.34 347.5,189.89 348,189.63 348.5,188.87 349,189.23 349.5,191.94 350,189.61 350.5,189.74 351,189.85 351.5,191.34 352,192.13 352.5,191.37 353,190.99 353.5,191.97 354,192.55 354.5,191.31 355,192.62 355.5,191.91 356,193.42 356.5,192.56 357,191.23 357.5,190.94 358,191.05 358.5,191.8 359,194.13 359.5,191.75 360,192.32 360.5,191.21 361,190.28 361.5,189.71 362,192.14 362.5,192.16 363,190.86 363.5,189.68 364,191 364.5,191.47 365,190.44 365.5,191.18 366,190.41 366.5,190.73 367,190.14 367.5,190.44 368,190.15 368.5,191.87 369,191.47 369.5,190.36 370,191.04 370.5,193.2 371,189.82 371.5,189.75 372,191.98 372.5,191.38 373,192.02 373.5,191.35 374,191.57 374.5,191.57 375,191.57 375.5,189.79 376,189.6 376.5,192.04 377,191.45 377.5,190.86 378,190.93 378.5,191.74 379,190.36 379.5,192.05 380,192.5 380.5,190.35 381,191.75 381.5,192.69 382,192.59 382.5,189.72 383,191.98 383.5,192.45 384,190.69 384.5,191.07 385,191.51 385.5,192.65 386,192.24 386.5,190.81 387,191.18 387.5,191.68 388,192.64 388.5,189.62 389,192.09 389.5,190.73 390,192.3 390.5,192.63 391,190.72 391.5,191.97 392,190.79 392.5,192.16 393,191.63 393.5,192.52 394,192.53 394.5,193.41 395,190.7 395.5,191.43 396,192.83 396.5,192.36 397,192.88 397.5,192.74 398,191.13 398.5,192.59 399,190.14 399.5,192.83 400,192.44 400.5,193.62 401,191.34 401.5,193.12 402,192.37 402.5,192.06 403,191.58 403.5,192.89 404,191.23 404.5,192.9 405,192.47 405.5,193.23 406,192.28 406.5,191.62 407,191.62 407.5,192.09 408,192.21 408.5,193.08 409,191.55 409.5,193.22 410,192.79 410.5,191.38 411,193.5 411.5,192.85 412,193.69 412.5,191.73 413,192.95 413.5,191.86 414,192.39 414.5,190.84 415,193.72 415.5,193.93 416,191.84 416.5,191.36 417,193.1 417.5,194.07 418,192.74 418.5,193 418.5,469 419,467.98 419.5,468.35 420,468.32 420.5,467.64 421,469.63 421.5,469.08 422,469.23 422.5,468.82 423,468.91 423.5,468.67 424,468.64 424.5,469.92 425,470.18 425.5,470.24 426,467.97 426.5,467.73 427,468.62 427.5,469.83 428,470.28 428.5,468.95 429,469.37 429.5,469.83 430,467.93 430.5,468.3 431,469.37 431.5,468 432,468.45 432.5,467.84 433,467.67 433.5,471.51 434,467.86 434.5,470.41 435,467.17 435.5,468.37 436,467.67 436.5,468.38 437,467.55 437.5,466.58 438,471.85 438.5,469.07 439,468.04 439.5,467.64 440,470.17 440.5,468.05 441,469.62 441.5,467.42 442,469.06 442.5,470.25 443,469.65 443.5,468.73 444,467.9 444.5,468.25 445,472.15 445.5,470.07 446,470.3 446.5,467.71 447,468.23 447.5,469 447.5,437.78 448.5,437.78 448.5,406.57 449.5,406.57 449.5,375.35 450.5,375.35 450.5,344.13 451.5,344.13 451.5,312.92 452.5,312.92 452.5,281.7 452.5,469 453,470.24 453.5,470.1 454,468.05 454.5,468.98 455,469.09 455.5,467.56 456,466.8 456.5,469.17 457,467.56 457.5,471.34 458,467.75 458.5,469.34 459,468.3 459.5,467.91 460,471.98 460.5,467.99 461,470.31 461.5,468.76 462,469.08 462.5,470.32 463,470.37 463.5,470.03 464,472.47 464.5,467.66 465,470.37 465.5,468.25 466,469.4 466.5,470.33 467,471.67 467.5,469.83 468,469.4 468.5,470.15 469,467.6 469.5,468.3 470,468.32 470.5,470.27 471,468.25 471.5,468.8 472,467.22 472.5,469.28 473,470.75 473.5,470.3 474,469.03 474.5,470.25 475,468.32 475.5,471.45 476,469.21 476.5,468.1 476.5,469 476.5,432.67 477.5,432.67 477.5,396.33 478.5,396.33 478.5,360 479.5,360 479.5,323.67 480.5,323.67 480.5,287.33 481.5,287.33 481.5,251 481.5,473 481.5,469 482,468.88 482.5,469.34 483,467.2 483.5,469.14 484,468.69 484.5,467.99 485,469.81 485.5,469.27 486,467.7 486.5,470.82 487,468.56 487.5,469.06 488,469.53 488.5,468.75 489,469.91 489.5,469.05 490,469.73 490.5,468.93 491,469.63 491.5,467.88 492,467.51 492.5,469.26 493,470.39 493.5,468.75 494,470.12 494.5,468.64 495,468.87 495.5,468.38 496,469.17 496.5,468.47 497,470.05 497.5,470.8 498,468.81 498.5,468.2 499,468.49 499.5,470.57 500,468.78 500.5,468.89 501,470.73 501.5,469.05 502,468.67 502.5,469.28 503,470.34 503.5,470.68 504,469.45 504.5,469.55 505,468.82 505.5,469.28 506.5,469 506.5,430.66 507.5,430.66 507.5,392.32 508.5,392.32 508.5,353.98 509.5,353.98 509.5,315.64 510.5,315.64 510.5,277.3 510.5,473 510.5,469 511,468.45 511.5,469.98 512,467.83 512.5,469.57 513,470.47 513.5,470.74 514,468.12 514.5,467.31 515,470.48 515.5,467.63 516,467.76 516.5,466.89 517,468.09 517.5,467.47 518,467.11 518.5,467.82 519,469.07 519.5,469.34 520,468.86 520.5,466.89 521,467.8 521.5,471 522,469.26 522.5,470.38 523,468.17 523.5,467.18 524,472.1 524.5,468.99 525,468.23 525.5,471.13 526,468.53 526.5,468.01 527,467.52 527.5,468.69 528,468.51 528.5,468.51 529,470.38 529.5,470.24 530,468.66 530.5,468.53 531,467.05 531.5,466.22 532,468.9 532.5,469 532.5,433 533.5,433 533.5,397 534.5,397 534.5,361 535.5,361 535.5,325 536.5,325 536.5,289 537.5,289 537.5,253 537.5,469 538,468.22 538.5,468.15 539,469.39 539.5,468.39 540,468.11 540.5,469.53 541,470.49 541.5,468.82 542,469.1 542.5,467.22 543,467.77 543.5,469.71 544,467.59 544.5,466.1 545,468.03 545.5,467.83 546,468.58 546.5,469.5 547,468.37 547.5,468.7 548,470.03 548.5,469.38 549,470.09 549.5,468.03 550,469.9 550.5,471.49 551,470.04 551.5,468.06 552,467.84 552.5,469.33 553,468.11 553.5,469.39 554,471.05 554.5,468.26 555,468.42 555.5,469.79 556,470.2 556.5,469.26 557.5,469 557.5,429.8 558.5,429.8 558.5,390.6 559.5,390.6 559.5,351.4 560.5,351.4 560.5,312.2 561.5,312.2 561.5,273 561.5,469 562,470.42 562.5,469.51 563,467.76 563.5,468.68 564,468.57 564.5,470.35 565,468.52 565.5,469.57 566,469.38 566.5,467.94 567,468.07 567.5,469.98 568,466.37 568.5,469.67 569,467.78 569.5,467.91 570,468.96 570.5,470.78 571,469.42 571.5,467.9 572,467.6 572.5,468.06 573,468.88 573.5,471.01 574,470.32 574.5,466.64 575,468.84 575.5,468.37 576,467.64 576.5,470.44 577,470.87 577.5,468.97 578,468.07 578.5,469 578.5,462 578.5,434 579.5,434 579.5,395 580.5,395 580.5,370 581.5,370 581.5,335 582.5,335 582.5,300 582.5,270 583.5,270 583.5,249 584.5,249 584.5,215 585.5,215 585.5,201 586.5,201 587,194.82 587.5,193.85 588,193.67 588.5,191.15 589,192.02 589.5,189.51 590,190.36 590.5,191.07 591,190.75 591.5,190.68 592,189.36 592.5,189.71 593,190.29 593.5,190.99 594,189.11 594.5,190.55 595,190.76 595.5,191.35 596,190.31 596.5,189.85 597,189.35 597.5,189.57 598,189.51 598.5,190.38 599,191.32 599.5,191.52 600,187.37 600.5,189.77 601,190.51 601.5,190.36 602,189.8 602.5,190.78 603,191.93 603.5,192.16 604,191.39 604.5,190.12 605,191.51 605.5,191.5 606,191.35 606.5,190.99 607,191.21 607.5,192.2 608,190.85 608.5,191.91 609,191.51 609.5,191.78 610,191.35 610.5,191.32 611,191.39 611.5,192.45 612,192.53 612.5,191.5 613,192.29 613.5,192.78 614,192.41 614.5,192.71 615,191.43 615.5,192.36 616,193.45 616.5,193.51 617,192.34 617.5,192.58 618,191.76 618.5,191.46 619,192.66 619.5,189.67 620,189.59 620.5,193.08 621,193.13 621.5,191.27 622,191.62 622.5,192.37 623,190.97 623.5,192.38 624,193.4 624.5,191.8 625,190.7 625.5,191.98 626,190.76 626.5,192.25 627,189.36 627.5,190.73 628,192.28 628.5,191.59 629,191.34 629.5,192.26 630,190.44 630.5,189.88 631,191.01 631.5,189.93 632,190.06 632.5,191.44 633,191.94 633.5,191.6 634,190.5 634.5,191.21 635,191.26 635.5,190.33 636,190.54 636.5,191.8 637,191.19 637.5,190.84 638,191.27 638.5,190.72 639,191.61 639.5,193.24 640,191.38 640.5,191.57 641,192.52 641.5,190.32 642,192.11 642.5,192.14 643,191.82 643.5,191 644,192.43 644.5,191.99 645,192.21 645.5,191.62 646,191.26 646.5,193.22 647,192.57 647.5,191.68 648,192.43 648.5,190.87 649,192.66 649.5,191.52 650,192.42 650.5,193.3 651,191.98 651.5,191.24 652,190.84 652.5,192.06 653,191.54 653.5,191.73 654,190.89 654.5,192.9 655,189.63 655.5,189.87 656,191.28 656.5,192 656.5,444 656.5,417 657.5,417 657.5,395 658.5,395 658.5,340 659.5,340 659.5,290 659.5,265 660.5,265 660.5,235 661.5,235 661.5,212 662.5,212 662.5,203 663.5,203 664,198.87 664.5,193.77 665,193.94 665.5,190.16 666,190.4 666.5,188.66 667,189.65 667.5,189.93 668,188.93 668.5,190.25 669,189.46 669.5,191.28 670,188.76 670.5,190.44 671,189.57 671.5,192.42 672,192.23 672.5,188.75 673,190.01 673.5,189.63 674,189.63 674.5,190.91 675,191.22 675.5,189.45 676,190.88 676.5,189.03 677,190.55 677.5,190.71 678,189.92 678.5,189.74 679,191.63 679.5,190.65 680,191.52 680.5,189.04 681,189.67 681.5,188.1 682,191.35 682.5,190.6 683,191.07 683.5,191.46 684,191.61 684.5,190.39 685,190.3 685.5,191.07 686,193.12 686.5,191.79 687,191.12 687.5,190.25 688,190.72 688.5,190.19 689,191.28 689.5,192.16 690,191.17 690.5,191.89 691,190.48 691.5,191.83 692,190.68 692.5,192.04 693,191.56 693.5,191.03 694,192.08 694.5,192.1 695,191.87 695.5,190.46 696,192.43 696.5,188.96 697,190.81 697.5,190.94 698,191.23 698.5,191.13 699,191.76 699.5,190.99 700,191.6 700.5,190.12 701,190.8 701.5,191.59 702,190.54 702.5,192.63 703,190.33 703.5,191.64 704,191.67 704.5,191.65 705,190.67 705.5,192.75 706,190.61 706.5,190.5 707,192.8 707.5,190.61 708,192.8 708.5,192.97 709,191.88 709.5,192.94 710,192.32 710.5,191.38 711,192.98 711.5,191.58 712,191.02 712.5,190.71 713,192.94 713.5,192.21 714,191.34 714.5,191.06 715,192.68 715.5,190.89 716,191.52 716.5,192.03 717,194.62 717.5,192.07 718,191.18 718.5,192.37 719,192.27 719.5,191.79 720,192.13 720.5,191.98 721,190.98 721.5,191.05 722,191.52 722.5,191.6 723,192.48 723.5,191.56 724,190.83 724.5,192.2 725,191.74 725.5,192.32 726,190.24 726.5,192.11 727,190.38 727.5,192.45 728,191.27 728.5,191.58 729,190.66 729.5,190.2 730,191.65 730.5,189.67 731,191.09 731.5,190.7 732,189.69 732.5,190.37 733,190.46 733.5,191.89 734,190.3 734.5,190.89 735,191.55 735.5,191.91 736,189.64 736.5,191.84 737,190.94 737.5,190.02 738,189.73 738.5,191.74 739,189.36 739.5,189.5 740,190.21 740.5,190.48 741,193.21 741.5,190.94 742,191.64 742.5,189.39 743,189.55 743.5,189.24 744,189.68 744.5,191.41 745,189.97 745.5,188.58 746,189.19 746.5,191.17 747,190.22 747.5,189.59 748,191.17 748.5,190.88 749,189.41 749.5,189.18 750,189.82 750.5,191.39 751,190.32 751.5,189.22 752,190.59 752.5,189.93 753,190.61 753.5,189.56 754,190 754.5,188.03 755,189.82 755.5,190.09 756,189.78 756.5,189.37 757,191.22 757.5,189.02 758,188.87 758.5,189.54 759,190.75 759.5,189.9 760,189.87 760.5,188.94 761,188.36 761.5,188.4 762,190.42 762.5,189.51 763,189.19 763.5,189.92 764,187.23 764.5,189.42 765,190.45 765.5,188.94 766,188.9 766.5,189.5 767,190.2 767.5,190.15 768,190.99 768.5,190.82 769,190.72 769.5,190.93 770,189.5 770.5,190.47 771,189.16 771.5,189.6 772,188.89 772.5,190.38 773,190.37 773.5,188.98 774,188.84 774.5,190.93 775,189.28 775.5,191 775.5,331.5 775.5,277 775.5,252 776.5,252 776.5,231 777.5,231 777.5,209 778.5,209 779,199.53 779.5,196.61 780,194.1 780.5,192.97 781,190.69 781.5,189.31 782,191.62 782.5,189.5 783,190.48 783.5,191.21 784,191.35 784.5,189.65 785,189.74 785.5,191.43 786,189.17 786.5,191.26 787,190.19 787.5,189.22 788,191.76 788.5,188.91 789,190.91 789.5,190.03 790,190.17 790.5,191.02 791,190.3 791.5,188.47 792,191.16 792.5,188.55 793,191.83 793.5,191.61 794,191.78 794.5,192.39 795,190.3 795.5,190.35 796,190.61 796.5,191.98 797,192.11 797.5,190.34 798,190.43 798.5,192.08 799,192.69 799.5,190.71 800,192.54 800.5,190.34 801,190.58 801.5,190.59 802,192 802.5,192.33 803,189.83 803.5,191.19 804,191.87 804.5,191.77 805,190.4 805.5,191.92 806,190.07 806.5,190.65 807,192.09 807.5,193.61 808,191.49 808.5,191.59 809,190.67 809.5,191.47 810,190.27 810.5,190.79 811,189.75 811.5,191.33 812,191.41 812.5,189.84 813,189.89 813.5,191.47 814,190.95 814.5,191.09 815,190.81 815.5,191.12 816,189.31 816.5,191.07 817,190.45 817.5,192.62 818,191.23 818.5,190.05 819,188.49 819.5,189.78 820,188.88 820.5,191.19 821,190.95 821.5,190.12 822,189.35 822.5,189.74 823,189.79 823.5,189.22 824,189.71 824.5,190.99 825,189.62 825.5,190.99 826,190.36 826.5,191.23 827,188.94 827.5,189.17 828,190.29 828.5,190.71 829,191.31 829.5,190.77 830,189.29 830.5,189.58 831,190.22 831.5,189.63 832,189.73 832.5,190.66 833,192.55 833.5,189.02 834,190.11 834.5,191.18 835,192.43 835.5,189.08 836,189.72 836.5,191.28 837,191.48 837.5,190.51 838,190.61 838.5,192.74 839,191.05 839.5,190.04 840,190.84 840.5,189.81 841,190.53 841.5,191.06 842,189.5 842.5,191.28 843,190.96 843.5,192.11 844,191.06 844.5,190.87 845,191.36 845.5,190.71 846,190.2 846.5,190.11 847,191.15 847.5,189.53 848,190.76 848.5,190.25 849,193.33 849.5,190.42 850,190.91 850.5,190.02 851,191.63 851.5,190.18 852,190.17 852.5,189.71 853,191.03 853.5,191.99 854,188.48 854.5,191.49 855,193.06 855.5,190.41 856,193.31 856.5,192.37 857,191 857.5,192.17 858,190.75 858.5,191.64 859,192.03 859.5,190.81 860,190.71 860.5,191.82 861,192.28 861.5,191.71 862,191.46 862.5,192.75 863,191.29 863.5,192.8 864,193.21 864.5,192.9 865,192.73 865.5,191.55 866,192.99 866.5,193.69 867,193.47 867.5,193 867.5,469 868,468.58 868.5,468.33 869,467.72 869.5,466.94 870,469.01 870.5,469.27 871,467.6 871.5,468.9 872,468.38 872.5,470.39 873,468.19 873.5,468.69 874,468.02 874.5,468.3 875,468.66 875.5,468.7 876,467.3 876.5,471.47 877,471.1 877.5,469 877.5,442 877.5,425 878.5,425 878.5,380 879.5,380 879.5,305 880.5,305 880.5,280 881.5,280 881.5,235 882.5,235 882.5,207 884.5,207 885,199.91 885.5,194.26 886,192.74 886.5,191.43 887,190.27 887.5,189.91 888,190.41 888.5,191.04 889,190.61 889.5,189.7 890,187.75 890.5,187.69 891,189.45 891.5,188.41 892,188.23 892.5,190.28 893,188.07 893.5,188.87 894,190.01 894.5,186.95 895,190.32 895.5,188.46 896,189.08 896.5,190.72 897,189.71 897.5,189.43 898,190.14 898.5,189.08 899,190.64 899.5,190.6 900,189.19 900.5,188.62 901,190.27 901.5,188.92 902,190.82 902.5,189.07 903,191.69 903.5,190.38 904,190.91 904.5,189.12 905,189.98 905.5,189.4 906,191.47 906.5,190.61 907,190.91 907.5,191.13 908,191.06 908.5,189.77 909,191.47 909.5,191.15 910,191.58 910.5,189.78 911,190.45 911.5,191.49 912,189.61 912.5,191.42 913,191.44 913.5,190.28 914,191.27 914.5,190.34 915,190.33 915.5,191.93 916,191.79 916.5,187.94 917,189.52 917.5,189.66 918,189.41 918.5,191.19 919,188.95 919.5,190.17 920,189.94 920.5,190.05 921,190.25 921.5,190.02 922,188.81 922.5,189.42 923,188.59 923.5,189.75 924,190.24 924.5,187.98 925,187.27 925.5,190.92 926,188.2 926.5,188.53 927,188.04 927.5,185.7 928,188.12 928.5,188.39 929,189.01 929.5,188.62 930,188.61 930.5,186.81 931,188.91 931.5,189.11 932,189.4 932.5,188.97 933,188.13 933.5,189.52 934,189.95 934.5,188.95 935,189.76 935.5,188.87 936,188.25 936.5,189.17 937,189.35 937.5,188.63 938,189.33 938.5,189.09 939,189.11 939.5,190.19 940,190.65 940.5,190.56 941,190.56 941.5,190.23 942,190.89 942.5,189.43 943,189.89 943.5,189.22 944,190.88 944.5,189.57 945,190.78 945.5,190.91 946,189.7 946.5,189.15 947,189.57 947.5,191.36 948,190.45 948.5,190.45 949,188.09 949.5,187.29 950,190.52 950.5,191.06 951,190.01 951.5,189.53 952,190.57 952.5,191.26 953,190.93 953.5,189.62 954,189.76 954.5,189.07 955,189.64 955.5,190.24 956,190.65 956.5,187.05 957,188.7 957.5,188.71 958,188.59 958.5,189.02 959,190.57 959.5,189.56 960,189.09 960.5,189.03 961,189.67 961.5,190.2 962,189.79 962.5,187.97 963,189.97 963.5,189.83 964,189.86 964.5,189.68 965,189.75 965.5,187.92 966,188.9 966.5,188.94 967,190.02 967.5,188.04 968,188.59 968.5,188.58 969,188.2 969.5,189.29 970,189.65 970.5,190.47 971,188.44 971.5,188.43" fill="none" stroke="#00c800" stroke-width="1" stroke-linejoin="miter" stroke-miterlimit="3"/>
 <g fill="none" stroke="#00ff00" stroke-width="1.5" stroke-linejoin="miter" stroke-miterlimit="3"><polyline points="16.5,469 17,467.38 17.5,469.11 18,467.67 18.5,467.61 19,468.78 19.5,469.2 20,469.39 20.5,467.69 21,466.3 21.5,469.61 22,468.1 22.5,467.4 23,468.99 23.5,469.83 24,470.27 24.5,467.15 25,468.4 25.5,468.53 26,470.52 26.5,468.53 27,468.77 27.5,467.73 28,469.87 28.5,468.52 29,468.99 29.5,469"/><polyline points="33.5,469 34,469.28 34.5,471.27 35,470.48 35.5,468.35 36,470.93 36.5,469.33 37,466.68 37.5,470.25 38,468 38.5,470.37 39,468.34 39.5,468.58 40,469.19 40.5,468.16 41,467.51 41.5,468.61 42,470.36 42.5,469.05 43,471.01 43.5,468.68 44,467.17 44.5,467.83 45,467.81 45.5,469.11 46,467.6 46.5,469.67 47,471.11 47.5,468.9 48,469.65 48.5,468.94 49,470.22 49.5,471.3 50,470.09 50.5,468.28 51,468 51.5,469.1 52,466.52 52.5,469.95 53,468.18 53.5,466.62 54,470.45 54.5,470.31 55,470.37 55.5,466.76 56,468.95 56.5,471.29 57,467.75 57.5,470.23 58,469.75 58.5,468.04 59,468.5 59.5,469"/><polyline points="64.5,469 65,470.41 65.5,468.7 66,468.64 66.5,469.27 67,469.47 67.5,469.29 68,469.29 68.5,469.9 69,467.81 69.5,467.92 70,468.08 70.5,465.67 71,468.48 71.5,472.08 72,469.49 72.5,469.05 73,468.51 73.5,467.56 74,466.84 74.5,468.92 75,471.11 75.5,467.82 76,466.64 76.5,469.19 77,470.24 77.5,469.34 78,469.04 78.5,468.86 79,468.93 79.5,469.6 80,468.32 80.5,469.29 81,469.51 81.5,466.06 82,467.96 82.5,467.32 83,468.16 83.5,468.69 84,470.47 84.5,467.98 85,467.62 85.5,467.78 86.5,469"/><polyline points="90.5,469 91,468.51 91.5,469.61 92,467.92 92.5,469.15 93,468.32 93.5,468.04 94,469.96 94.5,469.53 95,468.72 95.5,469.04 96,466.97 96.5,467.72 97,469.4 97.5,467.75 98,467.7 98.5,470.97 99,466.18 99.5,469.17 100,467.09 100.5,470.96 101,468.6 101.5,470.45 102,468.84 102.5,469.45 103,469.14 103.5,468.23 104,468.53 104.5,469.62 105,466.71 105.5,467.54 106,470.14 106.5,467.67 107,468.64 107.5,470.41 108,468.39 108.5,469"/><polyline points="111.5,469 112,471 112.5,470.4 113,466.48 113.5,467.9 114,468.48 114.5,468.4 115,467.75 115.5,471.98 116,469.66 116.5,469"/><polyline points="124.5,195 125,192.57 125.5,189.79 126,188.43 126.5,186.79 127,185.88 127.5,185.31 128,184.92 128.5,185.08 129,187.52 129.5,185.35 130,188.16 130.5,187.26 131,189.2 131.5,189.22 132,188.73 132.5,190.84 133,191.01 133.5,190.81 134,193.14 134.5,190.77 135,191.49 135.5,190.95 136,189.84 136.5,190.56 137,189.8 137.5,190.6 138,190.2 138.5,191.18 139,190.75 139.5,189.84 140,192.45 140.5,190.47 141,190.4 141.5,190.77 142,190 142.5,190.76 143,191.17 143.5,191.57 144,191.65 144.5,190.61 145,190.64 145.5,190.07 146,190.49 146.5,190.65 147,191.56 147.5,190.01 148,193.54 148.5,191.61 149,190.02 149.5,192.72 150,190.57 150.5,191.52 151,190.02 151.5,190.78 152,191.1 152.5,190.17 153,190.84 153.5,190.31 154,191.02 154.5,191.16 155,190.9 155.5,190.59 156,191.4 156.5,190.59 157,190.37 157.5,191.14 158,191.25 158.5,190.83 159,191.03 159.5,190.68 160,191.31 160.5,190.96 161,192.11 161.5,191.75 162,190.82 162.5,191.3 163,191.05 163.5,191.41 164,190.6 164.5,191.68 165,191.03 165.5,194.22 166,192.24 166.5,193.76 167,192.35 167.5,191.45 168,192.1 168.5,190.86 169,190.8 169.5,192 170,191.41 170.5,190.89 171,190.74 171.5,192.61 172,191.76 172.5,193.88 173,191.91 173.5,191.22 174,190.81 174.5,191.73 175,192.12 175.5,191.8 176,191.37 176.5,192.3 177,190.96 177.5,192.29 178,191.47 178.5,192.83 179,191.07 179.5,192"/><polyline points="187.5,199 188,195.31 188.5,193.28 189,193.07 189.5,191.31 190,191.09 190.5,190.41 191,191.2 191.5,191.18 192,189.27 192.5,189.84 193,192.21 193.5,188.95 194,189.91 194.5,189.38 195,190.67 195.5,187.86 196,189.45 196.5,192.83 197,191.42 197.5,187.92 198,189.94 198.5,190.97 199,192.31 199.5,190.47 200,189.97 200.5,190.36 201,189.84 201.5,190.24 202,190.4 202.5,189.46 203,189.49 203.5,190.23 204,193.78 204.5,190.12 205,190.86 205.5,190.59 206,191.19 206.5,191.36 207,191.71 207.5,189.86 208,189.59 208.5,190.32 209,189.98 209.5,191.71 210,191.54 210.5,190.91 211,190.09 211.5,191.29 212,191.06 212.5,189.49 213,192.19 213.5,192.16 214,190.17 214.5,192.01 215,191.19 215.5,191.74 216,190.65 216.5,190.61 217,190.62 217.5,190.46 218,190.71 218.5,192.7 219,191.3 219.5,192.05 220,194.57 220.5,190.71 221,191.08 221.5,188.64 222,191.12 222.5,191.33 223,192.14 223.5,190.55 224,191.81 224.5,189.03 225,190.46 225.5,192.58 226,192.38 226.5,191.33 227,192.3 227.5,192.43 228,190.88 228.5,192.1 229,191.2 229.5,192.18 230,190.72 230.5,192.72 231,190.65 231.5,192.53 232,191.54 232.5,192.87 233,189.49 233.5,192.73 234,189.23 234.5,194.68 235,191.02 235.5,191 236,190.77 236.5,192.42 237,192.55 237.5,194 238,192.07 238.5,190.82 239,192.27 239.5,192.16 240,192.11 240.5,191.09 241,190.52 241.5,190.92 242,192.36 242.5,190.72 243,193.59 243.5,192.07 244,192.13 244.5,191.64 245,191.65 245.5,191.7 246,190.69 246.5,191.81 247,192.47 247.5,191.73 248,190.34 248.5,191.51 249,191.85 249.5,192.67 250,193.65 250.5,190.33 251,192.4 251.5,191.11 252,191.82 252.5,192.84 253,192.54 253.5,190.8 254,192.46 254.5,192.8 255,193.86 255.5,191.28 256,189.93 256.5,192.18 257,191.44 257.5,192.56 258,194.66 258.5,191.74 259,192.31 259.5,191.26 260,192.72 260.5,191.55 261,193.47 261.5,191.72 262,193.82 262.5,192.98 263,192.89 263.5,192.43 264,191.2 264.5,192.17 265,192.82 265.5,190.56 266,191.4 266.5,191.95 267,193.15 267.5,189.97 268,189.71 268.5,192.55 269,193.03 269.5,192.07 270,191.92 270.5,189.44 271,191.66 271.5,190.82 272,190.71 272.5,191.32 273,192.23 273.5,191.68 274,189.72 274.5,192.43 275,191.98 275.5,191.74 276,190.89 276.5,191.11 277,191.32 277.5,190.99 278,192.92 278.5,193.15 279,192.9 279.5,191.41 280,191.64 280.5,192.87 281,191.19 281.5,192.9 282,191.64 282.5,191.62 283,192.92 283.5,192.73 284,191.84 284.5,189.04 285,191.45 285.5,191.03 286,189.36 286.5,189.89 287,190.37 287.5,190.87 288,191.59 288.5,192.68 289,190.88 289.5,192.91 290,190.98 290.5,189 291,192.24 291.5,189.61 292,191.53 292.5,191.57 293,190.84 293.5,192.91 294,192.17 294.5,191.42 295,191.21 295.5,192.42 296,191.25 296.5,190.95 297,189.8 297.5,194.13 298,191.92 298.5,191.18 299,191.57 299.5,191.36 300,191.42 300.5,192.42 301,191.01 301.5,190.94 302,192.42 302.5,192.25 303,191.71 303.5,191.44 304,191.48 304.5,192.06 305,193.11 305.5,191.6 306,191.54 306.5,192.78 307,192.53 307.5,191.81 308,193.92 308.5,192.43 309,191.4 309.5,192.74 310,192.5 310.5,192.5 311,191.6 311.5,193.06 312,193.06 312.5,191.16 313,191.24 313.5,191.12 314,191.48 314.5,191.03 315,191.44 315.5,193.72 316,191.97 316.5,192.89 317,191.36 317.5,192.46 318,192.33 318.5,192.38 319,192.88 319.5,192.18 320,192.59 320.5,193.58 321,191.74 321.5,191.16 322,193.56 322.5,192.37 323,192.93 323.5,190.81 324,194.62 324.5,191.18 325,193.05 325.5,191.03 326,192.09 326.5,192.02 327,192.78 327.5,191.78 328,191.3 328.5,191.74 329,191.09 329.5,193.11 330,192.7 330.5,192"/><polyline points="337.5,203 338,199.42 338.5,195.81 339,194.26 339.5,194.79 340,193.92 340.5,191.17 341,190.1 341.5,190 342,191.17 342.5,189.69 343,191.23 343.5,190.12 344,190.85 344.5,190.8 345,190.71 345.5,190.42 346,190.98 346.5,189.68 347,190.34 347.5,189.89 348,189.63 348.5,188.87 349,189.23 349.5,191.94 350,189.61 350.5,189.74 351,189.85 351.5,191.34 352,192.13 352.5,191.37 353,190.99 353.5,191.97 354,192.55 354.5,191.31 355,192.62 355.5,191.91 356,193.42 356.5,192.56 357,191.23 357.5,190.94 358,191.05 358.5,191.8 359,194.13 359.5,191.75 360,192.32 360.5,191.21 361,190.28 361.5,189.71 362,192.14 362.5,192.16 363,190.86 363.5,189.68 364,191 364.5,191.47 365,190.44 365.5,191.18 366,190.41 366.5,190.73 367,190.14 367.5,190.44 368,190.15 368.5,191.87 369,191.47 369.5,190.36 370,191.04 370.5,193.2 371,189.82 371.5,189.75 372,191.98 372.5,191.38 373,192.02 373.5,191.35 374,191.57 374.5,191.57 375,191.57 375.5,189.79 376,189.6 376.5,192.04 377,191.45 377.5,190.86 378,190.93 378.5,191.74 379,190.36 379.5,192.05 380,192.5 380.5,190.35 381,191.75 381.5,192.69 382,192.59 382.5,189.72 383,191.98 383.5,192.45 384,190.69 384.5,191.07 385,191.51 385.5,192.65 386,192.24 386.5,190.81 387,191.18 387.5,191.68 388,192.64 388.5,189.62 389,192.09 389.5,190.73 390,192.3 390.5,192.63 391,190.72 391.5,191.97 392,190.79 392.5,192.16 393,191.63 393.5,192.52 394,192.53 394.5,193.41 395,190.7 395.5,191.43 396,192.83 396.5,192.36 397,192.88 397.5,192.74 398,191.13 398.5,192.59 399,190.14 399.5,192.83 400,192.44 400.5,193.62 401,191.34 401.5,193.12 402,192.37 402.5,192.06 403,191.58 403.5,192.89 404,191.23 404.5,192.9 405,192.47 405.5,193.23 406,192.28 406.5,191.62 407,191.62 407.5,192.09 408,192.21 408.5,193.08 409,191.55 409.5,193.22 410,192.79 410.5,191.38 411,193.5 411.5,192.85 412,193.69 412.5,191.73 413,192.95 413.5,191.86 414,192.39 414.5,190.84 415,193.72 415.5,193.93 416,191.84 416.5,191.36 417,193.1 417.5,194.07 418,192.74 418.5,193"/><polyline points="418.5,469 419,467.98 419.5,468.35 420,468.32 420.5,467.64 421,469.63 421.5,469.08 422,469.23 422.5,468.82 423,468.91 423.5,468.67 424,468.64 424.5,469.92 425,470.18 425.5,470.24 426,467.97 426.5,467.73 427,468.62 427.5,469.83 428,470.28 428.5,468.95 429,469.37 429.5,469.83 430,467.93 430.5,468.3 431,469.37 431.5,468 432,468.45 432.5,467.84 433,467.67 433.5,471.51 434,467.86 434.5,470.41 435,467.17 435.5,468.37 436,467.67 436.5,468.38 437,467.55 437.5,466.58 438,471.85 438.5,469.07 439,468.04 439.5,467.64 440,470.17 440.5,468.05 441,469.62 441.5,467.42 442,469.06 442.5,470.25 443,469.65 443.5,468.73 444,467.9 444.5,468.25 445,472.15 445.5,470.07 446,470.3 446.5,467.71 447,468.23 447.5,469"/><polyline points="452.5,469 453,470.24 453.5,470.1 454,468.05 454.5,468.98 455,469.09 455.5,467.56 456,466.8 456.5,469.17 457,467.56 457.5,471.34 458,467.75 458.5,469.34 459,468.3 459.5,467.91 460,471.98 460.5,467.99 461,470.31 461.5,468.76 462,469.08 462.5,470.32 463,470.37 463.5,470.03 464,472.47 464.5,467.66 465,470.37 465.5,468.25 466,469.4 466.5,470.33 467,471.67 467.5,469.83 468,469.4 468.5,470.15 469,467.6 469.5,468.3 470,468.32 470.5,470.27 471,468.25 471.5,468.8 472,467.22 472.5,469.28 473,470.75 473.5,470.3 474,469.03 474.5,470.25 475,468.32 475.5,471.45 476,469.21 476.5,468.1 476.5,469"/><polyline points="481.5,469 482,468.88 482.5,469.34 483,467.2 483.5,469.14 484,468.69 484.5,467.99 485,469.81 485.5,469.27 486,467.7 486.5,470.82 487,468.56 487.5,469.06 488,469.53 488.5,468.75 489,469.91 489.5,469.05 490,469.73 490.5,468.93 491,469.63 491.5,467.88 492,467.51 492.5,469.26 493,470.39 493.5,468.75 494,470.12 494.5,468.64 495,468.87 495.5,468.38 496,469.17 496.5,468.47 497,470.05 497.5,470.8 498,468.81 498.5,468.2 499,468.49 499.5,470.57 500,468.78 500.5,468.89 501,470.73 501.5,469.05 502,468.67 502.5,469.28 503,470.34 503.5,470.68 504,469.45 504.5,469.55 505,468.82 505.5,469.28 506.5,469"/><polyline points="510.5,469 511,468.45 511.5,469.98 512,467.83 512.5,469.57 513,470.47 513.5,470.74 514,468.12 514.5,467.31 515,470.48 515.5,467.63 516,467.76 516.5,466.89 517,468.09 517.5,467.47 518,467.11 518.5,467.82 519,469.07 519.5,469.34 520,468.86 520.5,466.89 521,467.8 521.5,471 522,469.26 522.5,470.38 523,468.17 523.5,467.18 524,472.1 524.5,468.99 525,468.23 525.5,471.13 526,468.53 526.5,468.01 527,467.52 527.5,468.69 528,468.51 528.5,468.51 529,470.38 529.5,470.24 530,468.66 530.5,468.53 531,467.05 531.5,466.22 532,468.9 532.5,469"/><polyline points="537.5,469 538,468.22 538.5,468.15 539,469.39 539.5,468.39 540,468.11 540.5,469.53 541,470.49 541.5,468.82 542,469.1 542.5,467.22 543,467.77 543.5,469.71 544,467.59 544.5,466.1 545,468.03 545.5,467.83 546,468.58 546.5,469.5 547,468.37 547.5,468.7 548,470.03 548.5,469.38 549,470.09 549.5,468.03 550,469.9 550.5,471.49 551,470.04 551.5,468.06 552,467.84 552.5,469.33 553,468.11 553.5,469.39 554,471.05 554.5,468.26 555,468.42 555.5,469.79 556,470.2 556.5,469.26 557.5,469"/><polyline points="561.5,469 562,470.42 562.5,469.51 563,467.76 563.5,468.68 564,468.57 564.5,470.35 565,468.52 565.5,469.57 566,469.38 566.5,467.94 567,468.07 567.5,469.98 568,466.37 568.5,469.67 569,467.78 569.5,467.91 570,468.96 570.5,470.78 571,469.42 571.5,467.9 572,467.6 572.5,468.06 573,468.88 573.5,471.01 574,470.32 574.5,466.64 575,468.84 575.5,468.37 576,467.64 576.5,470.44 577,470.87 577.5,468.97 578,468.07 578.5,469"/><polyline points="586.5,201 587,194.82 587.5,193.85 588,193.67 588.5,191.15 589,192.02 589.5,189.51 590,190.36 590.5,191.07 591,190.75 591.5,190.68 592,189.36 592.5,189.71 593,190.29 593.5,190.99 594,189.11 594.5,190.55 595,190.76 595.5,191.35 596,190.31 596.5,189.85 597,189.35 597.5,189.57 598,189.51 598.5,190.38 599,191.32 599.5,191.52 600,187.37 600.5,189.77 601,190.51 601.5,190.36 602,189.8 602.5,190.78 603,191.93 603.5,192.16 604,191.39 604.5,190.12 605,191.51 605.5,191.5 606,191.35 606.5,190.99 607,191.21 607.5,192.2 608,190.85 608.5,191.91 609,191.51 609.5,191.78 610,191.35 610.5,191.32 611,191.39 611.5,192.45 612,192.53 612.5,191.5 613,192.29 613.5,192.78 614,192.41 614.5,192.71 615,191.43 615.5,192.36 616,193.45 616.5,193.51 617,192.34 617.5,192.58 618,191.76 618.5,191.46 619,192.66 619.5,189.67 620,189.59 620.5,193.08 621,193.13 621.5,191.27 622,191.62 622.5,192.37 623,190.97 623.5,192.38 624,193.4 624.5,191.8 625,190.7 625.5,191.98 626,190.76 626.5,192.25 627,189.36 627.5,190.73 628,192.28 628.5,191.59 629,191.34 629.5,192.26 630,190.44 630.5,189.88 631,191.01 631.5,189.93 632,190.06 632.5,191.44 633,191.94 633.5,191.6 634,190.5 634.5,191.21 635,191.26 635.5,190.33 636,190.54 636.5,191.8 637,191.19 637.5,190.84 638,191.27 638.5,190.72 639,191.61 639.5,193.24 640,191.38 640.5,191.57 641,192.52 641.5,190.32 642,192.11 642.5,192.14 643,191.82 643.5,191 644,192.43 644.5,191.99 645,192.21 645.5,191.62 646,191.26 646.5,193.22 647,192.57 647.5,191.68 648,192.43 648.5,190.87 649,192.66 649.5,191.52 650,192.42 650.5,193.3 651,191.98 651.5,191.24 652,190.84 652.5,192.06 653,191.54 653.5,191.73 654,190.89 654.5,192.9 655,189.63 655.5,189.87 656,191.28 656.5,192"/><polyline points="663.5,203 664,198.87 664.5,193.77 665,193.94 665.5,190.16 666,190.4 666.5,188.66 667,189.65 667.5,189.93 668,188.93 668.5,190.25 669,189.46 669.5,191.28 670,188.76 670.5,190.44 671,189.57 671.5,192.42 672,192.23 672.5,188.75 673,190.01 673.5,189.63 674,189.63 674.5,190.91 675,191.22 675.5,189.45 676,190.88 676.5,189.03 677,190.55 677.5,190.71 678,189.92 678.5,189.74 679,191.63 679.5,190.65 680,191.52 680.5,189.04 681,189.67 681.5,188.1 682,191.35 682.5,190.6 683,191.07 683.5,191.46 684,191.61 684.5,190.39 685,190.3 685.5,191.07 686,193.12 686.5,191.79 687,191.12 687.5,190.25 688,190.72 688.5,190.19 689,191.28 689.5,192.16 690,191.17 690.5,191.89 691,190.48 691.5,191.83 692,190.68 692.5,192.04 693,191.56 693.5,191.03 694,192.08 694.5,192.1 695,191.87 695.5,190.46 696,192.43 696.5,188.96 697,190.81 697.5,190.94 698,191.23 698.5,191.13 699,191.76 699.5,190.99 700,191.6 700.5,190.12 701,190.8 701.5,191.59 702,190.54 702.5,192.63 703,190.33 703.5,191.64 704,191.67 704.5,191.65 705,190.67 705.5,192.75 706,190.61 706.5,190.5 707,192.8 707.5,190.61 708,192.8 708.5,192.97 709,191.88 709.5,192.94 710,192.32 710.5,191.38 711,192.98 711.5,191.58 712,191.02 712.5,190.71 713,192.94 713.5,192.21 714,191.34 714.5,191.06 715,192.68 715.5,190.89 716,191.52 716.5,192.03 717,194.62 717.5,192.07 718,191.18 718.5,192.37 719,192.27 719.5,191.79 720,192.13 720.5,191.98 721,190.98 721.5,191.05 722,191.52 722.5,191.6 723,192.48 723.5,191.56 724,190.83 724.5,192.2 725,191.74 725.5,192.32 726,190.24 726.5,192.11 727,190.38 727.5,192.45 728,191.27 728.5,191.58 729,190.66 729.5,190.2 730,191.65 730.5,189.67 731,191.09 731.5,190.7 732,189.69 732.5,190.37 733,190.46 733.5,191.89 734,190.3 734.5,190.89 735,191.55 735.5,191.91 736,189.64 736.5,191.84 737,190.94 737.5,190.02 738,189.73 738.5,191.74 739,189.36 739.5,189.5 740,190.21 740.5,190.48 741,193.21 741.5,190.94 742,191.64 742.5,189.39 743,189.55 743.5,189.24 744,189.68 744.5,191.41 745,189.97 745.5,188.58 746,189.19 746.5,191.17 747,190.22 747.5,189.59 748,191.17 748.5,190.88 749,189.41 749.5,189.18 750,189.82 750.5,191.39 751,190.32 751.5,189.22 752,190.59 752.5,189.93 753,190.61 753.5,189.56 754,190 754.5,188.03 755,189.82 755.5,190.09 756,189.78 756.5,189.37 757,191.22 757.5,189.02 758,188.87 758.5,189.54 759,190.75 759.5,189.9 760,189.87 760.5,188.94 761,188.36 761.5,188.4 762,190.42 762.5,189.51 763,189.19 763.5,189.92 764,187.23 764.5,189.42 765,190.45 765.5,188.94 766,188.9 766.5,189.5 767,190.2 767.5,190.15 768,190.99 768.5,190.82 769,190.72 769.5,190.93 770,189.5 770.5,190.47 771,189.16 771.5,189.6 772,188.89 772.5,190.38 773,190.37 773.5,188.98 774,188.84 774.5,190.93 775,189.28 775.5,191"/><polyline points="778.5,209 779,199.53 779.5,196.61 780,194.1 780.5,192.97 781,190.69 781.5,189.31 782,191.62 782.5,189.5 783,190.48 783.5,191.21 784,191.35 784.5,189.65 785,189.74 785.5,191.43 786,189.17 786.5,191.26 787,190.19 787.5,189.22 788,191.76 788.5,188.91 789,190.91 789.5,190.03 790,190.17 790.5,191.02 791,190.3 791.5,188.47 792,191.16 792.5,188.55 793,191.83 793.5,191.61 794,191.78 794.5,192.39 795,190.3 795.5,190.35 796,190.61 796.5,191.98 797,192.11 797.5,190.34 798,190.43 798.5,192.08 799,192.69 799.5,190.71 800,192.54 800.5,190.34 801,190.58 801.5,190.59 802,192 802.5,192.33 803,189.83 803.5,191.19 804,191.87 804.5,191.77 805,190.4 805.5,191.92 806,190.07 806.5,190.65 807,192.09 807.5,193.61 808,191.49 808.5,191.59 809,190.67 809.5,191.47 810,190.27 810.5,190.79 811,189.75 811.5,191.33 812,191.41 812.5,189.84 813,189.89 813.5,191.47 814,190.95 814.5,191.09 815,190.81 815.5,191.12 816,189.31 816.5,191.07 817,190.45 817.5,192.62 818,191.23 818.5,190.05 819,188.49 819.5,189.78 820,188.88 820.5,191.19 821,190.95 821.5,190.12 822,189.35 822.5,189.74 823,189.79 823.5,189.22 824,189.71 824.5,190.99 825,189.62 825.5,190.99 826,190.36 826.5,191.23 827,188.94 827.5,189.17 828,190.29 828.5,190.71 829,191.31 829.5,190.77 830,189.29 830.5,189.58 831,190.22 831.5,189.63 832,189.73 832.5,190.66 833,192.55 833.5,189.02 834,190.11 834.5,191.18 835,192.43 835.5,189.08 836,189.72 836.5,191.28 837,191.48 837.5,190.51 838,190.61 838.5,192.74 839,191.05 839.5,190.04 840,190.84 840.5,189.81 841,190.53 841.5,191.06 842,189.5 842.5,191.28 843,190.96 843.5,192.11 844,191.06 844.5,190.87 845,191.36 845.5,190.71 846,190.2 846.5,190.11 847,191.15 847.5,189.53 848,190.76 848.5,190.25 849,193.33 849.5,190.42 850,190.91 850.5,190.02 851,191.63 851.5,190.18 852,190.17 852.5,189.71 853,191.03 853.5,191.99 854,188.48 854.5,191.49 855,193.06 855.5,190.41 856,193.31 856.5,192.37 857,191 857.5,192.17 858,190.75 858.5,191.64 859,192.03 859.5,190.81 860,190.71 860.5,191.82 861,192.28 861.5,191.71 862,191.46 862.5,192.75 863,191.29 863.5,192.8 864,193.21 864.5,192.9 865,192.73 865.5,191.55 866,192.99 866.5,193.69 867,193.47 867.5,193"/><polyline points="867.5,469 868,468.58 868.5,468.33 869,467.72 869.5,466.94 870,469.01 870.5,469.27 871,467.6 871.5,468.9 872,468.38 872.5,470.39 873,468.19 873.5,468.69 874,468.02 874.5,468.3 875,468.66 875.5,468.7 876,467.3 876.5,471.47 877,471.1 877.5,469"/><polyline points="884.5,207 885,199.91 885.5,194.26 886,192.74 886.5,191.43 887,190.27 887.5,189.91 888,190.41 888.5,191.04 889,190.61 889.5,189.7 890,187.75 890.5,187.69 891,189.45 891.5,188.41 892,188.23 892.5,190.28 893,188.07 893.5,188.87 894,190.01 894.5,186.95 895,190.32 895.5,188.46 896,189.08 896.5,190.72 897,189.71 897.5,189.43 898,190.14 898.5,189.08 899,190.64 899.5,190.6 900,189.19 900.5,188.62 901,190.27 901.5,188.92 902,190.82 902.5,189.07 903,191.69 903.5,190.38 904,190.91 904.5,189.12 905,189.98 905.5,189.4 906,191.47 906.5,190.61 907,190.91 907.5,191.13 908,191.06 908.5,189.77 909,191.47 909.5,191.15 910,191.58 910.5,189.78 911,190.45 911.5,191.49 912,189.61 912.5,191.42 913,191.44 913.5,190.28 914,191.27 914.5,190.34 915,190.33 915.5,191.93 916,191.79 916.5,187.94 917,189.52 917.5,189.66 918,189.41 918.5,191.19 919,188.95 919.5,190.17 920,189.94 920.5,190.05 921,190.25 921.5,190.02 922,188.81 922.5,189.42 923,188.59 923.5,189.75 924,190.24 924.5,187.98 925,187.27 925.5,190.92 926,188.2 926.5,188.53 927,188.04 927.5,185.7 928,188.12 928.5,188.39 929,189.01 929.5,188.62 930,188.61 930.5,186.81 931,188.91 931.5,189.11 932,189.4 932.5,188.97 933,188.13 933.5,189.52 934,189.95 934.5,188.95 935,189.76 935.5,188.87 936,188.25 936.5,189.17 937,189.35 937.5,188.63 938,189.33 938.5,189.09 939,189.11 939.5,190.19 940,190.65 940.5,190.56 941,190.56 941.5,190.23 942,190.89 942.5,189.43 943,189.89 943.5,189.22 944,190.88 944.5,189.57 945,190.78 945.5,190.91 946,189.7 946.5,189.15 947,189.57 947.5,191.36 948,190.45 948.5,190.45 949,188.09 949.5,187.29 950,190.52 950.5,191.06 951,190.01 951.5,189.53 952,190.57 952.5,191.26 953,190.93 953.5,189.62 954,189.76 954.5,189.07 955,189.64 955.5,190.24 956,190.65 956.5,187.05 957,188.7 957.5,188.71 958,188.59 958.5,189.02 959,190.57 959.5,189.56 960,189.09 960.5,189.03 961,189.67 961.5,190.2 962,189.79 962.5,187.97 963,189.97 963.5,189.83 964,189.86 964.5,189.68 965,189.75 965.5,187.92 966,188.9 966.5,188.94 967,190.02 967.5,188.04 968,188.59 968.5,188.58 969,188.2 969.5,189.29 970,189.65 970.5,190.47 971,188.44 971.5,188.43"/></g>
 <path d="M303.5,190.04V192.91M304,190.03V193.15M304.5,189.56V193.75M305,188.81V193.44M305.5,188.08V194.66M306,188.89V194.6M306.5,186.35V194.43M307,185.74V196.46M307.5,186.93V197.17M308,184.94V198.82M308.5,183.69V198.23M309,184.83V195.06M309.5,185.51V197.94M310,186.19V194.96M310.5,187.82V195.25M311,187.44V194.47M311.5,189.52V194.68M312,189.16V193.84M312.5,189.56V193M313,189.95V193.14M313.5,190.11V192.96" stroke="#00ff00" stroke-width="0.9" fill="none"/><path d="M639.5,189.9V192.63M640,189.57V192.74M640.5,189.41V193.03M641,189.29V193.21M641.5,188.68V194.55M642,187.47V194.15M642.5,187.54V196.98M643,186.87V196.11M643.5,188.58V195.77M644,189.1V193.98M644.5,189.42V193.52M645,189.74V192.99M645.5,189.84V192.48" stroke="#00ff00" stroke-width="0.9" fill="none"/><path d="M768.5,189.6V192M769,189.44V192.16M769.5,189.18V192.27M770,188.86V192.41M770.5,188.54V193M771,188.52V193.27M771.5,188.34V193.17M772,187.78V193.46M772.5,187.72V195.03M773,186.19V193.63M773.5,187.34V195.66M774,187.54V195.13M774.5,187.65V196.85M775,184.76V195.17" stroke="#00ff00" stroke-width="0.9" fill="none"/>
 <!-- cursor -->
 <line x1="494" y1="18.8" x2="494" y2="583" stroke="#ffffff" stroke-width="2" stroke-dasharray="7.9 2.1 2.8 2.06"/>
 <!-- marker plus -->
 <rect x="926" y="293" width="1" height="10" fill="#00d000"/>
 <rect x="922" y="297" width="9" height="1" fill="#006000"/>
 <!-- channel tag -->
 <rect x="971" y="466" width="4" height="1" fill="#00ff00"/>
 <rect x="975" y="461" width="18" height="11" fill="#00ff00"/>
 <text x="984" y="469" font-family="Liberation Sans" font-size="9" font-weight="bold" fill="#000" text-anchor="middle">2</text>
</svg>
<div class="tt" style="left:24px">Setup</div>
<div class="tt" style="left:91px">Cursors</div>
<div class="tt" style="left:168px">Refresh</div>
<div class="tt" style="left:245px">File</div>
<div class="tt" style="left:299px">Print</div>
<div class="tt" style="left:357px">Preview</div>
<div class="yl" style="top:63.82px">14</div><div class="yl" style="top:120.16px">12</div><div class="yl" style="top:176.5px">10</div><div class="yl" style="top:232.84px">8</div><div class="yl" style="top:289.18px">6</div><div class="yl" style="top:345.52px">4</div><div class="yl" style="top:401.86px">2</div><div class="yl" style="top:458.2px">0</div><div class="yl" style="top:514.54px">-2</div><div class="yl" style="top:570.88px">-4</div>
<div class="xl" style="left:-13.5px">0</div><div class="xl" style="left:82.5px">80</div><div class="xl" style="left:177.5px">160</div><div class="xl" style="left:273.5px">240</div><div class="xl" style="left:368.5px">320</div><div class="xl" style="left:464.5px">400</div><div class="xl" style="left:559.5px">480</div><div class="xl" style="left:655.5px">560</div><div class="xl" style="left:750.5px">640</div><div class="xl" style="left:846.5px">720</div><div class="xl" style="left:942.5px">800 ms</div>
<div class="tt" style="left:183px;top:604px;">00:08:153</div>
<div class="tt" style="left:940px;top:604px;">x16</div>
<svg width="1000" height="633" viewBox="0 0 1000 633">
 <defs>
  <linearGradient id="gw" x1="0" y1="0" x2="0" y2="1">
   <stop offset="0" stop-color="#ffffff"/><stop offset="0.46" stop-color="#ececf1"/>
   <stop offset="0.5" stop-color="#d6d6de"/><stop offset="0.62" stop-color="#dcdce4"/>
   <stop offset="1" stop-color="#f8f6fd"/>
  </linearGradient>
  <linearGradient id="gd" x1="0" y1="0" x2="0" y2="1">
   <stop offset="0" stop-color="#5a5a5a"/><stop offset="0.47" stop-color="#404040"/>
   <stop offset="0.5" stop-color="#050505"/><stop offset="0.62" stop-color="#08141f"/>
   <stop offset="0.85" stop-color="#141c24"/><stop offset="1" stop-color="#2a2e32"/>
  </linearGradient>
  <linearGradient id="gg" x1="0" y1="0" x2="1" y2="0">
   <stop offset="0" stop-color="#1d8a2e"/><stop offset="0.3" stop-color="#2ea03f"/><stop offset="1" stop-color="#3aa84a"/>
  </linearGradient>
 </defs>
 <!-- camera -->
 <circle cx="18.9" cy="613" r="11.3" fill="url(#gd)" stroke="#101418" stroke-width="0.6"/>
 <g fill="#8a9098" stroke="none">
  <rect x="12.5" y="609.6" width="13.5" height="8.2" rx="0.6"/>
  <path d="M16.3 609.8 L17.6 607.6 H21 L22.3 609.8Z"/>
 </g>
 <circle cx="19.2" cy="615.6" r="3.4" fill="#9aa0a8"/>
 <ellipse cx="19.2" cy="615" rx="2.6" ry="1.7" fill="#050505"/>
 <g stroke="#7f858c" stroke-width="1" stroke-linecap="round">
  <line x1="14.3" y1="605.3" x2="15.9" y2="607.2"/><line x1="19.3" y1="603.8" x2="19.3" y2="606.6"/><line x1="24.4" y1="605.3" x2="22.7" y2="607.2"/>
 </g>
 <!-- stop -->
 <circle cx="58.6" cy="613" r="11.3" fill="url(#gd)" stroke="#101418" stroke-width="0.6"/>
 <rect x="52.8" y="607" width="12" height="12" fill="#8a8e98"/>
 <!-- play -->
 <circle cx="98.45" cy="613.1" r="12.3" fill="url(#gw)" stroke="#2a1a72" stroke-width="0.9"/>
 <path d="M93 607 L106 613.2 L93 619.2Z" fill="url(#gg)"/>
 <!-- record -->
 <circle cx="138.2" cy="613" r="11.2" fill="url(#gd)" stroke="#101418" stroke-width="0.6"/>
 <circle cx="138" cy="613.2" r="6" fill="#8a8e98"/>
 <!-- rewind fast -->
 <circle cx="256.5" cy="613.1" r="12.3" fill="url(#gw)" stroke="#2a1a72" stroke-width="0.9"/>
 <path d="M256.2 605.9 L248.8 613.2 L256.2 620.6 L257.6 619.2 L252.3 613.2 L257.6 607.3Z" fill="#4a6494"/>
 <path d="M262 606.2 L254.2 613.3 L262 620.6Z" fill="#4a6494"/>
 <!-- step back -->
 <circle cx="295.8" cy="613.1" r="12.3" fill="url(#gw)" stroke="#2a1a72" stroke-width="0.9"/>
 <path d="M299.2 605.8 L291.2 613.1 L299.2 620.3Z" fill="#4a6494"/>
 <!-- step fwd -->
 <circle cx="822.4" cy="613.1" r="12.3" fill="url(#gw)" stroke="#2a1a72" stroke-width="0.9"/>
 <path d="M818.8 605.8 L827.2 613.1 L818.8 620Z" fill="#4a6494"/>
 <!-- fast fwd -->
 <circle cx="862.2" cy="613.1" r="12.3" fill="url(#gw)" stroke="#2a1a72" stroke-width="0.9"/>
 <path d="M856 605.8 L864 613.3 L856 621Z" fill="#4a6494"/>
 <path d="M862.4 605.8 L870.2 613.3 L862.4 621 L862.4 618.6 L866.8 613.3 L862.4 608.2Z" fill="#4a6494"/>
 <!-- fit -->
 <circle cx="901.4" cy="613.1" r="12.3" fill="url(#gw)" stroke="#2a1a72" stroke-width="0.9"/>
 <rect x="894" y="606" width="14.7" height="14.5" rx="1" fill="#44608f"/>
 <path d="M895 614.6 H897.8 V617.6 H901.4 V619.8 H895Z" fill="#e6e6ee"/>
 <path d="M902.4 606.8 H908 V612.6 H905.4 V609.4 H902.4Z" fill="#e6e6ee"/>
 <path d="M898.6 610 L906.2 617.8" stroke="#e6e6ee" stroke-width="3.4"/>
 <path d="M898.6 610 L906.2 617.8" stroke="#44608f" stroke-width="1.4"/>
 <path d="M896.4 607.8 L903.4 608.4 L897 614.6Z" fill="#44608f" stroke="#e6e6ee" stroke-width="0.9"/>
 <!-- zoom -->
 <circle cx="980.85" cy="613.1" r="12.3" fill="url(#gw)" stroke="#2a1a72" stroke-width="0.9"/>
 <circle cx="978.1" cy="610.1" r="4.9" fill="none" stroke="#34507a" stroke-width="1.9"/>
 <path d="M982.2 614.4 L987 619.2" stroke="#44608f" stroke-width="3" stroke-linecap="round"/>
 <rect x="317" y="611" width="1" height="2" fill="#bbbbbb"/><rect x="346" y="611" width="1" height="2" fill="#bbbbbb"/><rect x="376" y="611" width="1" height="2" fill="#bbbbbb"/><rect x="406" y="611" width="1" height="2" fill="#bbbbbb"/><rect x="435" y="611" width="1" height="2" fill="#bbbbbb"/><rect x="464" y="611" width="1" height="2" fill="#bbbbbb"/><rect x="494" y="611" width="1" height="2" fill="#bbbbbb"/><rect x="524" y="611" width="1" height="2" fill="#bbbbbb"/><rect x="553" y="611" width="1" height="2" fill="#bbbbbb"/><rect x="582" y="611" width="1" height="2" fill="#bbbbbb"/><rect x="612" y="611" width="1" height="2" fill="#bbbbbb"/><rect x="642" y="611" width="1" height="2" fill="#bbbbbb"/><rect x="671" y="611" width="1" height="2" fill="#bbbbbb"/><rect x="700" y="611" width="1" height="2" fill="#bbbbbb"/><rect x="730" y="611" width="1" height="2" fill="#bbbbbb"/><rect x="760" y="611" width="1" height="2" fill="#bbbbbb"/><rect x="789" y="611" width="1" height="2" fill="#bbbbbb"/><rect x="800" y="611" width="1" height="2" fill="#bbbbbb"/>
 <rect x="314" y="602" width="490" height="3" rx="1" fill="#e2e2e2"/>
 <path d="M599.2 598.8 H606.2 V607 L602.7 610 L599.2 607Z" fill="#000"/>
 <path d="M600 599.2 H605.5 V606.8 L602.75 609.2 L600 606.8Z" fill="#dcdcdc"/>
</svg>
</body></html>
